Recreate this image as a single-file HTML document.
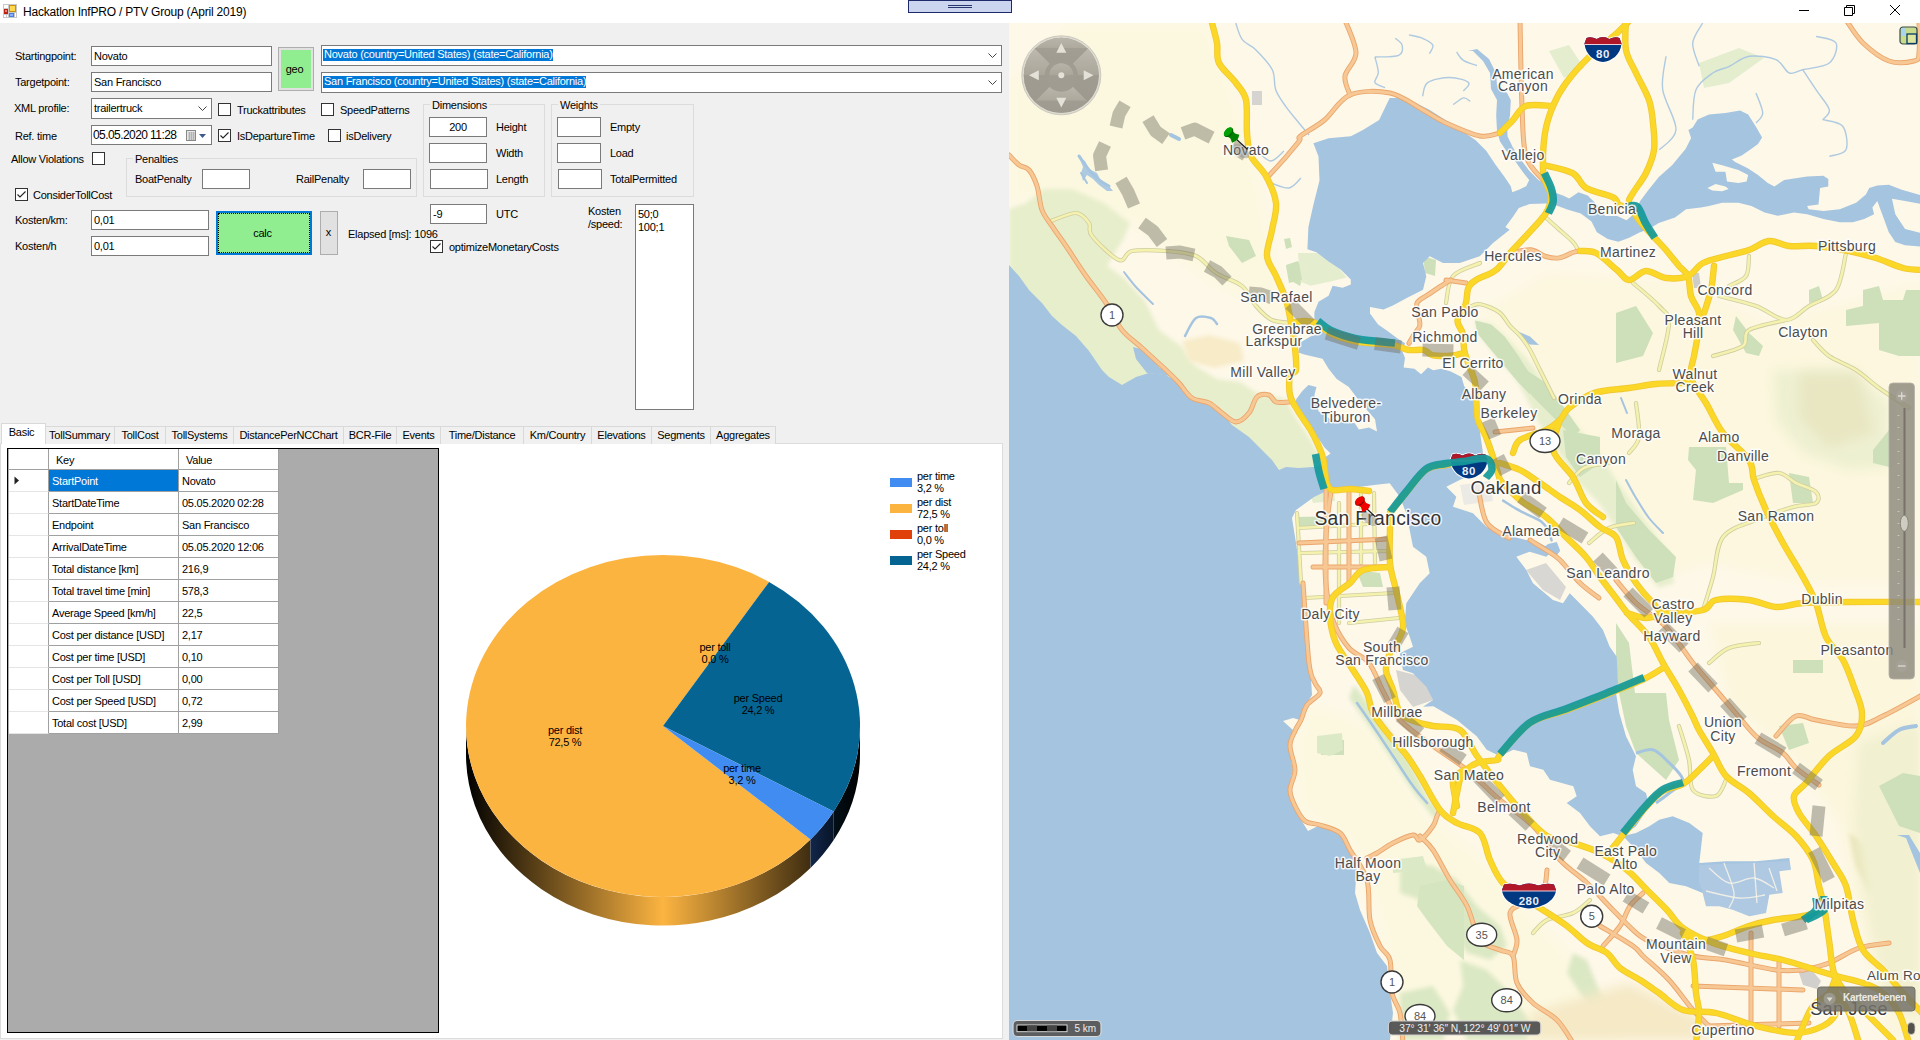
<!DOCTYPE html>
<html><head><meta charset="utf-8"><title>Hackatlon InfPRO / PTV Group (April 2019)</title>
<style>
html,body{margin:0;padding:0;}
body{width:1920px;height:1040px;overflow:hidden;position:relative;background:#fff;font-family:"Liberation Sans",sans-serif;font-size:11px;color:#000;}
.a{position:absolute;}
.l{position:absolute;margin-top:1px;line-height:13px;white-space:nowrap;font-size:11px;letter-spacing:-0.25px;}
.tb{position:absolute;box-sizing:border-box;background:#fff;border:1px solid #7a7a7a;height:20px;line-height:19px;padding-left:2px;white-space:nowrap;overflow:hidden;font-size:11px;letter-spacing:-0.25px;}
.cb{position:absolute;box-sizing:border-box;width:13px;height:13px;background:#fff;border:1px solid #333;}
.cb svg{position:absolute;left:0;top:0;}
.gb{position:absolute;box-sizing:border-box;border:1px solid #dcdcdc;}
.gb span{position:absolute;top:-6px;left:6px;background:#f0f0f0;padding:0 2px;line-height:13px;letter-spacing:-0.25px;}
.tab{position:absolute;box-sizing:border-box;top:426px;height:18px;border:1px solid #d9d9d9;border-bottom:none;border-left:none;background:#f0f0f0;line-height:17px;text-align:center;letter-spacing:-0.25px;white-space:nowrap;}
.gr{position:absolute;box-sizing:border-box;background:#fff;border-right:1px solid #a0a0a0;border-bottom:1px solid #a0a0a0;height:22px;line-height:23px;padding-left:3px;white-space:nowrap;letter-spacing:-0.25px;overflow:hidden;}
</style></head><body>
<!-- title bar -->
<div class="a" id="titlebar" style="left:0;top:0;width:1920px;height:23px;background:#fff;"></div>
<svg class="a" style="left:3px;top:4px" width="14" height="14" viewBox="0 0 14 14">
<rect x="0" y="0" width="14" height="14" fill="#c8c8c8"/><rect x="1" y="1" width="4" height="3" fill="#fff"/><rect x="1" y="5" width="4" height="5" fill="#c02010"/><rect x="2" y="6" width="2" height="2" fill="#f08070"/><rect x="6" y="1" width="7" height="7" fill="#c89010"/><rect x="7" y="2" width="5" height="5" fill="#ffd850"/><rect x="6" y="9" width="5" height="4" fill="#4a7fe0"/><rect x="7" y="10" width="3" height="2" fill="#8ab0ff"/><rect x="1" y="11" width="2" height="2" fill="#fff"/><rect x="4" y="11" width="1" height="2" fill="#fff"/><rect x="12" y="9" width="1" height="4" fill="#fff"/></svg>
<div class="a" style="left:23px;top:5px;font-size:12px;line-height:15px;white-space:nowrap;letter-spacing:-0.2px;" id="ttl">Hackatlon InfPRO / PTV Group (April 2019)</div>
<div class="a" style="left:908px;top:0;width:104px;height:13px;box-sizing:border-box;background:#ccd5f0;border:1px solid #1e2a6a;"><div class="a" style="left:39px;top:4px;width:24px;height:1px;background:#2a3570"></div><div class="a" style="left:39px;top:6px;width:24px;height:1px;background:#2a3570"></div></div>
<svg class="a" style="left:1790px;top:0" width="130" height="23" viewBox="0 0 130 23"><g stroke="#000" stroke-width="1" fill="none"><path d="M9 10.5h10"/><path d="M54.5 7.5h8v8h-8z" /><path d="M56.5 7.5v-2h8v8h-2"/><path d="M100 5l10 10M110 5l-10 10"/></g></svg>
<!-- form -->
<div class="a" id="form" style="left:0;top:23px;width:1009px;height:1017px;background:#f0f0f0;"></div>
<div class="l" style="left:15px;top:49px">Startingpoint:</div>
<div class="l" style="left:15px;top:75px">Targetpoint:</div>
<div class="l" style="left:14px;top:101px">XML profile:</div>
<div class="l" style="left:15px;top:129px">Ref. time</div>
<div class="l" style="left:11px;top:152px">Allow Violations</div>
<div class="tb" style="left:91px;top:46px;width:181px">Novato</div>
<div class="tb" style="left:91px;top:72px;width:181px">San Francisco</div>
<div class="tb" style="left:91px;top:98px;width:121px;height:21px;line-height:19px;padding-left:2px">trailertruck<svg class="a" style="right:4px;top:7px" width="9" height="6" viewBox="0 0 9 6"><path d="M0.5 0.5l4 4l4-4" stroke="#444" fill="none"/></svg></div>
<div class="tb" style="left:91px;top:125px;width:121px;padding-left:1px;font-size:12px;letter-spacing:-0.57px">05.05.2020 11:28<svg class="a" style="left:93px;top:2px" width="25" height="15" viewBox="0 0 25 15"><rect x="1.5" y="2.5" width="9" height="10" fill="#e8e8e8" stroke="#888"/><path d="M3 5h7M3 7h7M3 9h7M3 11h7M4.5 4v8M6.500 4v8M8.5 4v8" stroke="#aaa" stroke-width="0.8"/><path d="M14 6h7l-3.500 4z" fill="#3c5a8c"/></svg></div>
<div class="a" style="left:278px;top:47px;width:36px;height:44px;box-sizing:border-box;border:1px solid #adadad;background:#e1e1e1;"><div class="a" style="left:2px;top:2px;width:30px;height:38px;background:#90ee90;text-align:center;line-height:39px;letter-spacing:-0.25px;text-indent:-3px">geo</div></div>
<div class="tb" style="left:321px;top:45px;width:681px;height:21px;line-height:20px;padding-left:2px"><span style="position:absolute;left:1px;top:3px;background:#0078d7;color:#fff;height:12px;line-height:11px;padding-left:1px">Novato (country=United States) (state=California)</span><svg class="a" style="right:4px;top:7px" width="9" height="6" viewBox="0 0 9 6"><path d="M0.5 0.5l4 4l4-4" stroke="#444" fill="none"/></svg></div>
<div class="tb" style="left:321px;top:72px;width:681px;height:21px;line-height:20px;padding-left:2px"><span style="position:absolute;left:1px;top:3px;background:#0078d7;color:#fff;height:12px;line-height:11px;padding-left:1px">San Francisco (country=United States) (state=California)</span><svg class="a" style="right:4px;top:7px" width="9" height="6" viewBox="0 0 9 6"><path d="M0.5 0.5l4 4l4-4" stroke="#444" fill="none"/></svg></div>
<div class="cb" style="left:218px;top:103px"></div><div class="l" style="left:237px;top:103px">Truckattributes</div>
<div class="cb" style="left:321px;top:103px"></div><div class="l" style="left:340px;top:103px">SpeedPatterns</div>
<div class="cb" style="left:218px;top:129px"><svg width="11" height="11" viewBox="0 0 11 11"><path d="M1.500 5.500l2.500 2.500l5.500-5.500" stroke="#222" fill="none" stroke-width="1.1"/></svg></div><div class="l" style="left:237px;top:129px">IsDepartureTime</div>
<div class="cb" style="left:328px;top:129px"></div><div class="l" style="left:346px;top:129px">isDelivery</div>
<div class="cb" style="left:92px;top:152px"></div>
<div class="gb" style="left:126px;top:158px;width:291px;height:39px"><span>Penalties</span></div>
<div class="l" style="left:135px;top:172px">BoatPenalty</div><div class="tb" style="left:202px;top:169px;width:48px"></div>
<div class="l" style="left:296px;top:172px">RailPenalty</div><div class="tb" style="left:363px;top:169px;width:48px"></div>
<div class="gb" style="left:423px;top:104px;width:122px;height:93px"><span>Dimensions</span></div>
<div class="tb" style="left:429px;top:117px;width:58px;text-align:center;padding:0">200</div><div class="l" style="left:496px;top:120px">Height</div>
<div class="tb" style="left:429px;top:143px;width:58px"></div><div class="l" style="left:496px;top:146px">Width</div>
<div class="tb" style="left:430px;top:169px;width:58px"></div><div class="l" style="left:496px;top:172px">Length</div>
<div class="gb" style="left:551px;top:104px;width:143px;height:93px"><span>Weights</span></div>
<div class="tb" style="left:557px;top:117px;width:44px"></div><div class="l" style="left:610px;top:120px">Empty</div>
<div class="tb" style="left:557px;top:143px;width:44px"></div><div class="l" style="left:610px;top:146px">Load</div>
<div class="tb" style="left:558px;top:169px;width:44px"></div><div class="l" style="left:610px;top:172px">TotalPermitted</div>
<div class="tb" style="left:430px;top:204px;width:57px;padding-left:2px">-9</div><div class="l" style="left:496px;top:207px">UTC</div>
<div class="l" style="left:588px;top:204px">Kosten<br>/speed:</div>
<div class="tb" style="left:635px;top:204px;width:59px;height:206px;line-height:13px;padding:3px 0 0 2px">50;0<br>100;1</div>
<div class="cb" style="left:15px;top:188px"><svg width="11" height="11" viewBox="0 0 11 11"><path d="M1.500 5.500l2.500 2.500l5.500-5.500" stroke="#222" fill="none" stroke-width="1.1"/></svg></div><div class="l" style="left:33px;top:188px">ConsiderTollCost</div>
<div class="l" style="left:15px;top:213px">Kosten/km:</div><div class="tb" style="left:91px;top:210px;width:118px">0,01</div>
<div class="l" style="left:15px;top:239px">Kosten/h</div><div class="tb" style="left:91px;top:236px;width:118px">0,01</div>
<div class="a" style="left:216px;top:211px;width:96px;height:44px;box-sizing:border-box;border:2px solid #0078d7;background:#90ee90;"><div class="a" style="left:0;top:0;right:0;bottom:0;border:1px dotted #000;text-align:center;line-height:38px;letter-spacing:-0.25px;text-indent:-3px">calc</div></div>
<div class="a" style="left:320px;top:211px;width:18px;height:44px;box-sizing:border-box;border:1px solid #adadad;background:#e1e1e1;text-align:center;line-height:40px;text-indent:-1px">x</div>
<div class="l" style="left:348px;top:227px">Elapsed [ms]: 1096</div>
<div class="cb" style="left:430px;top:240px"><svg width="11" height="11" viewBox="0 0 11 11"><path d="M1.500 5.500l2.500 2.500l5.500-5.500" stroke="#222" fill="none" stroke-width="1.1"/></svg></div><div class="l" style="left:449px;top:240px">optimizeMonetaryCosts</div>
<!-- tabs -->
<div class="a" style="left:0px;top:443px;width:1003px;height:596px;box-sizing:border-box;background:#fff;border:1px solid #dcdcdc;"></div>
<div class="tab" style="left:45px;width:70px">TollSummary</div>
<div class="tab" style="left:115px;width:51px">TollCost</div>
<div class="tab" style="left:166px;width:68px">TollSystems</div>
<div class="tab" style="left:234px;width:110px">DistancePerNCChart</div>
<div class="tab" style="left:344px;width:53px">BCR-File</div>
<div class="tab" style="left:397px;width:44px">Events</div>
<div class="tab" style="left:441px;width:83px">Time/Distance</div>
<div class="tab" style="left:524px;width:68px">Km/Country</div>
<div class="tab" style="left:592px;width:60px">Elevations</div>
<div class="tab" style="left:652px;width:59px">Segments</div>
<div class="tab" style="left:711px;width:65px">Aggregates</div>
<div class="tab" style="left:1px;top:423px;width:45px;height:21px;background:#fff;border-left:1px solid #d9d9d9;line-height:17px;text-indent:-4px;">Basic</div>
<!-- grid -->
<div class="a" style="left:7px;top:448px;width:432px;height:585px;box-sizing:border-box;background:#ababab;border:1px solid #000;"></div>
<div class="gr" style="left:9px;top:449px;width:40px;height:21px;"></div>
<div class="gr" style="left:49px;top:449px;width:130px;height:21px;padding-left:7px">Key</div>
<div class="gr" style="left:179px;top:449px;width:100px;height:21px;padding-left:7px">Value</div>
<div class="gr" style="left:9px;top:470px;width:40px;border-right-color:#a0a0a0;border-bottom-color:#e5e5e5"></div>
<div class="gr" style="left:49px;top:470px;width:130px;background:#0078d7;color:#fff;">StartPoint</div>
<div class="gr" style="left:179px;top:470px;width:100px;">Novato</div>
<div class="gr" style="left:9px;top:492px;width:40px;border-right-color:#a0a0a0;border-bottom-color:#e5e5e5"></div>
<div class="gr" style="left:49px;top:492px;width:130px;">StartDateTime</div>
<div class="gr" style="left:179px;top:492px;width:100px;">05.05.2020 02:28</div>
<div class="gr" style="left:9px;top:514px;width:40px;border-right-color:#a0a0a0;border-bottom-color:#e5e5e5"></div>
<div class="gr" style="left:49px;top:514px;width:130px;">Endpoint</div>
<div class="gr" style="left:179px;top:514px;width:100px;">San Francisco</div>
<div class="gr" style="left:9px;top:536px;width:40px;border-right-color:#a0a0a0;border-bottom-color:#e5e5e5"></div>
<div class="gr" style="left:49px;top:536px;width:130px;">ArrivalDateTime</div>
<div class="gr" style="left:179px;top:536px;width:100px;">05.05.2020 12:06</div>
<div class="gr" style="left:9px;top:558px;width:40px;border-right-color:#a0a0a0;border-bottom-color:#e5e5e5"></div>
<div class="gr" style="left:49px;top:558px;width:130px;">Total distance [km]</div>
<div class="gr" style="left:179px;top:558px;width:100px;">216,9</div>
<div class="gr" style="left:9px;top:580px;width:40px;border-right-color:#a0a0a0;border-bottom-color:#e5e5e5"></div>
<div class="gr" style="left:49px;top:580px;width:130px;">Total travel time [min]</div>
<div class="gr" style="left:179px;top:580px;width:100px;">578,3</div>
<div class="gr" style="left:9px;top:602px;width:40px;border-right-color:#a0a0a0;border-bottom-color:#e5e5e5"></div>
<div class="gr" style="left:49px;top:602px;width:130px;">Average Speed [km/h]</div>
<div class="gr" style="left:179px;top:602px;width:100px;">22,5</div>
<div class="gr" style="left:9px;top:624px;width:40px;border-right-color:#a0a0a0;border-bottom-color:#e5e5e5"></div>
<div class="gr" style="left:49px;top:624px;width:130px;">Cost per distance [USD]</div>
<div class="gr" style="left:179px;top:624px;width:100px;">2,17</div>
<div class="gr" style="left:9px;top:646px;width:40px;border-right-color:#a0a0a0;border-bottom-color:#e5e5e5"></div>
<div class="gr" style="left:49px;top:646px;width:130px;">Cost per time [USD]</div>
<div class="gr" style="left:179px;top:646px;width:100px;">0,10</div>
<div class="gr" style="left:9px;top:668px;width:40px;border-right-color:#a0a0a0;border-bottom-color:#e5e5e5"></div>
<div class="gr" style="left:49px;top:668px;width:130px;">Cost per Toll [USD]</div>
<div class="gr" style="left:179px;top:668px;width:100px;">0,00</div>
<div class="gr" style="left:9px;top:690px;width:40px;border-right-color:#a0a0a0;border-bottom-color:#e5e5e5"></div>
<div class="gr" style="left:49px;top:690px;width:130px;">Cost per Speed [USD]</div>
<div class="gr" style="left:179px;top:690px;width:100px;">0,72</div>
<div class="gr" style="left:9px;top:712px;width:40px;border-right-color:#a0a0a0;border-bottom-color:#e5e5e5"></div>
<div class="gr" style="left:49px;top:712px;width:130px;">Total cost [USD]</div>
<div class="gr" style="left:179px;top:712px;width:100px;">2,99</div>
<svg class="a" style="left:14px;top:476px" width="6" height="9" viewBox="0 0 6 9"><path d="M0.5 0.5v8l4.500-4z" fill="#222"/></svg>
<!-- pie -->
<svg class="a" style="left:440px;top:445px" width="560" height="590" viewBox="440 445 560 590">
<defs><linearGradient id="og" gradientUnits="userSpaceOnUse" x1="466" y1="0" x2="860" y2="0"><stop offset="0" stop-color="#000"/><stop offset="0.5" stop-color="#fcb441"/><stop offset="1" stop-color="#000"/></linearGradient><linearGradient id="bg1" gradientUnits="userSpaceOnUse" x1="810" y1="0" x2="833" y2="0"><stop offset="0" stop-color="#13274a"/><stop offset="1" stop-color="#08152a"/></linearGradient><linearGradient id="bg2" gradientUnits="userSpaceOnUse" x1="833" y1="0" x2="860" y2="0"><stop offset="0" stop-color="#021018"/><stop offset="1" stop-color="#000"/></linearGradient></defs>
<path d="M466.0 726.0 A197 171 0 0 0 810.5 839.4 L810.5 867.9 A197 171 0 0 1 466.0 754.5 Z" fill="url(#og)"/>
<path d="M810.5 839.4 A197 171 0 0 0 833.7 811.4 L833.7 839.9 A197 171 0 0 1 810.5 867.9 Z" fill="url(#bg1)"/>
<path d="M833.7 811.4 A197 171 0 0 0 860.0 726.0 L860.0 754.5 A197 171 0 0 1 833.7 839.9 Z" fill="url(#bg2)"/>
<path d="M663 726 L810.5 839.4 A197 171 0 1 1 769.1 581.9 Z" fill="#fcb441"/>
<path d="M663 726 L769.1 581.9 A197 171 0 0 1 833.7 811.4 Z" fill="#056492"/>
<path d="M663 726 L833.7 811.4 A197 171 0 0 1 810.5 839.4 Z" fill="#418cf0"/>
<g font-family="Liberation Sans, sans-serif" fill="#000">
<text x="715" y="651" text-anchor="middle" font-size="11" letter-spacing="-0.25">per toll</text><text x="715" y="663" text-anchor="middle" font-size="11" letter-spacing="-0.25">0,0 %</text>
<text x="758" y="702" text-anchor="middle" font-size="11" letter-spacing="-0.25">per Speed</text><text x="758" y="714" text-anchor="middle" font-size="11" letter-spacing="-0.25">24,2 %</text>
<text x="565" y="734" text-anchor="middle" font-size="11" letter-spacing="-0.25">per dist</text><text x="565" y="746" text-anchor="middle" font-size="11" letter-spacing="-0.25">72,5 %</text>
<text x="742" y="772" text-anchor="middle" font-size="11" letter-spacing="-0.25">per time</text><text x="742" y="784" text-anchor="middle" font-size="11" letter-spacing="-0.25">3,2 %</text>
<rect x="890" y="478" width="22" height="9" fill="#418cf0"/>
<text x="917" y="480" font-size="11" letter-spacing="-0.25">per time</text><text x="917" y="492" font-size="11" letter-spacing="-0.25">3,2 %</text>
<rect x="890" y="504" width="22" height="9" fill="#fcb441"/>
<text x="917" y="506" font-size="11" letter-spacing="-0.25">per dist</text><text x="917" y="518" font-size="11" letter-spacing="-0.25">72,5 %</text>
<rect x="890" y="530" width="22" height="9" fill="#e0400a"/>
<text x="917" y="532" font-size="11" letter-spacing="-0.25">per toll</text><text x="917" y="544" font-size="11" letter-spacing="-0.25">0,0 %</text>
<rect x="890" y="556" width="22" height="9" fill="#056492"/>
<text x="917" y="558" font-size="11" letter-spacing="-0.25">per Speed</text><text x="917" y="570" font-size="11" letter-spacing="-0.25">24,2 %</text>
</g></svg>

<svg class="a" style="left:1009px;top:23px" width="911" height="1017" viewBox="0 0 911 1017" font-family="Liberation Sans, sans-serif">
<defs><filter id="bl" x="-20%" y="-20%" width="140%" height="140%"><feGaussianBlur stdDeviation="6"/></filter><filter id="bl2" x="-20%" y="-20%" width="140%" height="140%"><feGaussianBlur stdDeviation="2"/></filter><clipPath id="mc"><rect x="0" y="0" width="911" height="1017"/></clipPath></defs>
<g clip-path="url(#mc)">
<rect x="0" y="0" width="911" height="1017" fill="#fef8e9"/>
<path d="M60.0 0.0 L200.0 0.0 L230.0 80.0 L250.0 150.0 L270.0 250.0 L280.0 300.0 L200.0 260.0 L120.0 200.0 L60.0 170.0 L0.0 180.0 L0.0 60.0 Z" fill="#fcf8e0" opacity="1" filter="url(#bl)"/>
<path d="M540.0 250.0 L680.0 260.0 L760.0 300.0 L911.0 260.0 L911.0 560.0 L800.0 560.0 L700.0 540.0 L640.0 560.0 L560.0 420.0 L500.0 330.0 L470.0 290.0 Z" fill="#fcf7de" opacity="1" filter="url(#bl)"/>
<path d="M700.0 600.0 L911.0 600.0 L911.0 1017.0 L880.0 1017.0 L850.0 900.0 L830.0 800.0 L790.0 740.0 L720.0 680.0 Z" fill="#fbf6dc" opacity="1" filter="url(#bl)"/>
<path d="M300.0 680.0 L360.0 700.0 L420.0 790.0 L470.0 830.0 L560.0 930.0 L620.0 1017.0 L390.0 1017.0 L370.0 900.0 L340.0 820.0 L290.0 790.0 L285.0 720.0 Z" fill="#fcf8e0" opacity="1" filter="url(#bl)"/>
<path d="M0.0 186.0 L17.0 180.0 L35.0 166.0 L63.0 166.0 L95.0 180.0 L121.0 200.0 L115.0 215.0 L98.0 243.0 L115.0 255.0 L136.0 278.0 L150.0 307.0 L173.0 324.0 L185.0 342.0 L208.0 356.0 L231.0 359.0 L248.0 370.0 L277.0 376.0 L285.0 392.0 L298.0 411.0 L308.0 428.0 L312.0 445.0 L270.0 470.0 L90.0 360.0 L0.0 260.0 Z" fill="#e7eecb" opacity="1" filter="url(#bl2)"/>
<path d="M173.0 318.0 L200.0 312.0 L231.0 320.0 L235.0 338.0 L205.0 345.0 L180.0 338.0 Z" fill="#f7ebc8" opacity="1" filter="url(#bl2)"/>
<path d="M466.0 297.0 L482.0 301.0 L496.0 313.0 L521.0 340.0 L545.0 375.0 L565.0 400.0 L590.0 430.0 L607.0 457.0 L630.0 490.0 L660.0 530.0 L665.0 560.0 L650.0 565.0 L625.0 535.0 L607.0 505.0 L590.0 480.0 L570.0 460.0 L550.0 430.0 L530.0 400.0 L509.0 359.0 L482.0 327.0 L469.0 311.0 Z" fill="#e6eecd" opacity="1" filter="url(#bl2)"/>
<path d="M764.0 347.0 L840.0 347.0 L880.0 380.0 L880.0 444.0 L840.0 447.0 L794.0 430.0 L767.0 397.0 Z" fill="#eef0d2" opacity="1" filter="url(#bl)"/>
<path d="M790.0 350.0 L850.0 350.0 L865.0 410.0 L820.0 425.0 L790.0 395.0 Z" fill="#e9e7c2" opacity="1" filter="url(#bl)"/>
<path d="M840.0 810.0 L867.0 827.0 L874.0 857.0 L860.0 870.0 L847.0 843.0 Z" fill="#e6e3b6" opacity="1" filter="url(#bl2)"/>
<path d="M850.0 720.0 L911.0 700.0 L911.0 1000.0 L880.0 980.0 L860.0 900.0 L845.0 800.0 Z" fill="#f1f0d0" opacity="1" filter="url(#bl)"/>
<path d="M391.0 837.0 L424.0 843.0 L448.0 857.0 L468.0 883.0 L491.0 903.0 L498.0 923.0 L481.0 937.0 L458.0 930.0 L441.0 903.0 L411.0 877.0 L391.0 870.0 Z" fill="#dbe8c4" opacity="1" filter="url(#bl2)"/>
<path d="M451.0 937.0 L478.0 947.0 L501.0 970.0 L524.0 1003.0 L518.0 1017.0 L458.0 1017.0 L444.0 987.0 L454.0 963.0 Z" fill="#dbe8c4" opacity="1" filter="url(#bl2)"/>
<path d="M564.0 930.0 L578.0 937.0 L591.0 970.0 L604.0 990.0 L591.0 997.0 L571.0 970.0 L558.0 950.0 Z" fill="#dbe8c4" opacity="1" filter="url(#bl2)"/>
<path d="M391.0 970.0 L424.0 963.0 L441.0 990.0 L434.0 1017.0 L391.0 1017.0 Z" fill="#dbe8c4" opacity="1" filter="url(#bl2)"/>
<path d="M345.0 662.0 L380.0 707.0 L400.0 737.0 L420.0 777.0 L432.0 790.0 L425.0 795.0 L405.0 770.0 L385.0 740.0 L365.0 710.0 L340.0 675.0 Z" fill="#dce9c6" opacity="1" filter="url(#bl2)"/>
<path d="M520.0 990.0 L620.0 960.0 L700.0 1000.0 L700.0 1017.0 L520.0 1017.0 Z" fill="#f5e9c6" opacity="1" filter="url(#bl)"/>
<path d="M607.0 290.0 L627.0 283.0 L644.0 310.0 L634.0 333.0 L607.0 340.0 Z" fill="#cde0ba" opacity="1"/>
<path d="M800.0 267.0 L810.0 263.0 L814.0 277.0 L800.0 280.0 Z" fill="#cde0ba" opacity="1"/>
<path d="M837.0 287.0 L854.0 283.0 L854.0 267.0 L870.0 263.0 L874.0 277.0 L894.0 277.0 L897.0 267.0 L911.0 267.0 L911.0 333.0 L890.0 333.0 L870.0 327.0 L870.0 300.0 L837.0 303.0 Z" fill="#cde0ba" opacity="1"/>
<path d="M727.0 293.0 L740.0 310.0 L754.0 323.0 L750.0 333.0 L737.0 330.0 L724.0 307.0 Z" fill="#cde0ba" opacity="1"/>
<path d="M680.0 424.0 L717.0 424.0 L720.0 460.0 L734.0 460.0 L734.0 467.0 L704.0 480.0 L684.0 477.0 L687.0 447.0 L679.0 437.0 Z" fill="#cde0ba" opacity="1"/>
<path d="M607.0 457.0 L617.0 480.0 L640.0 507.0 L667.0 534.0 L664.0 554.0 L647.0 560.0 L627.0 534.0 L607.0 504.0 Z" fill="#cde0ba" opacity="1"/>
<path d="M780.0 450.0 L800.0 454.0 L804.0 480.0 L784.0 480.0 Z" fill="#cde0ba" opacity="1"/>
<path d="M784.0 637.0 L814.0 637.0 L814.0 650.0 L784.0 650.0 Z" fill="#cde0ba" opacity="1"/>
<path d="M864.0 427.0 L880.0 407.0 L880.0 444.0 L864.0 440.0 Z" fill="#cde0ba" opacity="1"/>
<path d="M466.0 297.4 L482.1 301.4 L495.6 313.5 L509.1 332.4 L521.0 351.2 L521.0 371.4 L509.1 359.3 L495.6 343.1 L482.1 327.0 L468.7 310.8 Z" fill="#cde0ba" opacity="1"/>
<path d="M517.0 347.0 L537.0 360.0 L557.0 387.0 L571.0 407.0 L564.0 414.0 L544.0 394.0 L524.0 374.0 L511.0 357.0 Z" fill="#cde0ba" opacity="1"/>
<path d="M554.0 407.0 L591.0 414.0 L591.0 440.0 L571.0 454.0 L557.0 434.0 Z" fill="#cde0ba" opacity="1"/>
<path d="M610.0 670.0 L657.0 670.0 L660.0 697.0 L670.0 737.0 L657.0 757.0 L627.0 730.0 L617.0 703.0 Z" fill="#cde0ba" opacity="1"/>
<path d="M607.0 600.0 L620.0 620.0 L626.0 670.0 L610.0 670.0 L607.0 640.0 Z" fill="#cde0ba" opacity="1"/>
<path d="M770.0 703.0 L794.0 700.0 L800.0 720.0 L780.0 727.0 Z" fill="#cde0ba" opacity="1"/>
<path d="M870.0 763.0 L894.0 750.0 L911.0 753.0 L911.0 810.0 L890.0 803.0 L880.0 783.0 Z" fill="#cde0ba" opacity="1"/>
<path d="M277.0 242.0 L289.0 238.0 L295.0 250.0 L291.0 263.0 L281.0 257.0 Z" fill="#cde0ba" opacity="1"/>
<path d="M275.0 216.0 L281.0 215.0 L283.0 224.0 L277.0 226.0 Z" fill="#cde0ba" opacity="1"/>
<path d="M289.0 230.0 L309.5 230.0 L327.7 242.5 L337.8 254.6 L321.6 258.6 L301.4 262.7 L291.0 258.6 Z" fill="#e4eecf" opacity="1"/>
<path d="M217.0 213.0 L240.0 217.0 L247.0 233.0 L233.0 240.0 L220.0 223.0 Z" fill="#cde0ba" opacity="1"/>
<path d="M277.0 243.0 L290.0 240.0 L293.0 257.0 L280.0 260.0 Z" fill="#cde0ba" opacity="1"/>
<path d="M414.0 233.0 L427.0 237.0 L426.0 253.0 L416.0 250.0 Z" fill="#cde0ba" opacity="1"/>
<path d="M347.0 547.0 L371.0 550.0 L374.0 564.0 L354.0 564.0 Z" fill="#cde0ba" opacity="1"/>
<path d="M288.0 494.0 L330.0 493.0 L330.0 502.0 L288.0 504.0 Z" fill="#cde0ba" opacity="1"/>
<path d="M300.0 468.0 L325.0 466.0 L326.0 478.0 L304.0 480.0 Z" fill="#e4eecf" opacity="1"/>
<path d="M312.0 717.0 L335.0 717.0 L335.0 732.0 L312.0 732.0 Z" fill="#cde0ba" opacity="1"/>
<path d="M308.0 713.0 L333.0 710.0 L334.0 727.0 L321.0 733.0 L308.0 730.0 Z" fill="#dce9c6" opacity="1"/>
<path d="M384.0 837.0 L414.0 833.0 L418.0 847.0 L384.0 850.0 Z" fill="#dce9c6" opacity="1"/>
<path d="M411.0 863.0 L438.0 857.0 L455.0 863.0 L455.0 937.0 L438.0 923.0 L418.0 897.0 L408.0 883.0 Z" fill="#d5e5bf" opacity="1"/>
<path d="M540.0 28.0 L560.0 22.0 L575.0 45.0 L555.0 55.0 Z" fill="#e4eecf" opacity="1"/>
<path d="M690.0 40.0 L730.0 25.0 L755.0 35.0 L720.0 60.0 L695.0 65.0 Z" fill="#e4eecf" opacity="1"/>
<path d="M387.0 647.0 L414.0 654.0 L424.0 677.0 L404.0 684.0 L391.0 667.0 Z" fill="#d6d4d0" opacity="1"/>
<path d="M517.0 547.0 L537.0 540.0 L557.0 564.0 L551.0 577.0 L534.0 567.0 Z" fill="#d9d7d3" opacity="1"/>
<path d="M451.0 462.0 L481.0 458.0 L484.0 478.0 L455.0 482.0 Z" fill="#eceae4" opacity="1"/>
<path d="M243.0 68.0 L253.0 68.0 L253.0 82.0 L243.0 82.0 Z" fill="#d6d4d0" opacity="1"/>
<path d="M683.0 250.0 L690.0 250.0 L692.0 265.0 L685.0 265.0 Z" fill="#cfcdc8" opacity="1"/>
<path d="M789.0 947.0 L800.0 944.0 L812.0 958.0 L808.0 966.0 L794.0 962.0 Z" fill="#d2d0cc" opacity="1"/>
<path d="M0.0 242.0 L10.0 253.0 L20.0 267.0 L33.0 280.0 L43.0 293.0 L53.0 302.0 L67.0 313.0 L80.0 328.0 L93.0 347.0 L100.0 354.0 L113.0 362.0 L127.0 354.0 L140.0 350.0 L157.0 352.0 L170.0 360.0 L183.0 375.0 L200.0 380.0 L213.0 390.0 L223.0 402.0 L240.0 414.0 L253.0 427.0 L263.0 437.0 L270.0 447.0 L277.0 444.0 L290.0 445.0 L304.0 444.0 L312.5 442.8 L330.0 445.0 L330.0 462.0 L319.6 467.0 L305.0 474.0 L287.0 487.0 L283.0 495.0 L287.0 520.0 L292.0 554.0 L297.0 587.0 L300.0 630.0 L302.0 655.0 L303.0 672.0 L298.0 680.0 L291.0 697.0 L284.0 695.0 L274.0 698.0 L284.0 707.0 L279.0 723.0 L284.0 747.0 L279.0 767.0 L284.0 783.0 L294.0 800.0 L299.0 808.0 L311.0 802.0 L331.0 810.0 L341.0 827.0 L348.0 843.0 L346.0 870.0 L351.0 887.0 L361.0 910.0 L368.0 930.0 L378.0 943.0 L381.0 970.0 L384.0 990.0 L381.0 1017.0 L0.0 1017.0 Z" fill="#a5c4e0"/>
<path d="M312.5 442.8 L315.5 434.7 L321.6 430.6 L315.5 424.6 L307.5 412.5 L295.3 398.3 L285.2 384.2 L287.3 376.1 L293.3 368.0 L299.4 362.0 L307.5 364.0 L305.4 372.0 L309.5 388.2 L321.6 396.3 L345.8 400.3 L349.9 406.4 L360.0 404.4 L368.0 408.4 L366.0 396.3 L351.9 380.1 L345.8 372.0 L339.8 364.0 L327.7 355.9 L319.6 345.8 L313.5 335.7 L295.3 331.6 L289.3 329.6 L291.3 319.5 L301.4 313.5 L311.5 310.4 L308.5 307.1 L305.4 299.0 L305.4 288.9 L309.5 278.8 L319.6 272.8 L323.6 262.7 L333.7 264.7 L341.8 261.6 L341.8 256.6 L331.7 246.5 L319.6 238.4 L307.5 229.3 L298.4 226.3 L299.4 204.1 L304.4 181.8 L310.5 157.6 L309.5 133.4 L304.4 120.2 L319.6 115.2 L341.8 113.2 L353.9 107.1 L370.1 97.0 L380.7 75.0 L396.5 74.9 L420.4 86.8 L444.2 102.1 L466.4 117.0 L477.2 127.8 L486.4 141.6 L495.6 153.9 L501.8 163.2 L503.3 169.3 L511.0 166.2 L517.2 163.2 L520.2 157.0 L529.5 157.0 L534.1 160.1 L544.8 169.3 L554.0 172.4 L560.2 175.5 L569.5 169.3 L578.7 172.4 L591.0 184.7 L596.0 193.1 L608.1 193.1 L617.5 197.2 L625.6 190.4 L631.0 178.3 L639.0 167.6 L649.8 154.1 L663.3 142.0 L676.7 125.8 L682.1 115.1 L679.4 107.0 L683.7 104.6 L688.6 96.4 L700.0 91.5 L716.4 89.9 L731.1 87.4 L739.2 91.5 L747.4 104.6 L753.1 114.4 L749.0 120.9 L742.5 125.8 L732.7 132.4 L722.9 136.4 L726.2 138.9 L739.2 145.4 L749.0 152.0 L758.8 160.1 L765.4 163.4 L775.2 156.9 L786.6 155.2 L798.1 153.6 L814.4 152.8 L819.3 156.1 L819.3 163.4 L811.1 165.0 L809.5 181.4 L798.1 183.0 L799.7 186.3 L814.4 187.9 L830.7 186.3 L847.1 179.7 L856.9 171.6 L860.2 165.0 L868.3 162.6 L879.8 161.8 L892.8 166.7 L915.0 173.2 L915.0 181.4 L896.1 178.1 L883.0 175.7 L886.3 191.2 L896.1 205.9 L915.0 210.8 L915.0 223.9 L896.1 222.2 L886.3 219.0 L879.8 209.2 L873.2 191.2 L868.3 178.1 L863.4 184.6 L865.1 191.2 L855.2 196.1 L843.8 199.3 L830.7 199.3 L814.4 196.1 L798.1 191.2 L785.0 189.5 L768.6 192.8 L755.6 189.5 L742.5 183.0 L729.4 179.7 L713.1 179.7 L700.0 183.0 L691.8 184.6 L677.1 186.3 L666.0 194.5 L649.8 199.9 L639.0 206.6 L631.0 209.3 L620.2 214.7 L609.4 218.7 L598.7 216.0 L587.9 209.3 L582.5 198.5 L571.8 190.4 L558.3 186.4 L547.5 182.4 L536.8 180.4 L520.6 181.0 L509.8 185.1 L504.5 193.1 L496.4 203.9 L500.7 206.7 L484.0 220.0 L470.7 233.3 L450.7 240.0 L434.0 240.0 L420.7 233.3 L414.0 240.0 L417.3 253.3 L414.0 266.7 L412.1 267.8 L398.7 274.5 L383.9 282.6 L374.5 286.6 L361.0 283.9 L361.0 290.6 L369.1 301.4 L378.5 308.1 L387.9 314.9 L396.0 320.3 L393.3 328.3 L396.0 335.1 L394.6 344.5 L405.4 345.8 L412.1 351.2 L418.9 344.5 L424.3 347.2 L432.3 345.8 L441.8 348.5 L452.5 353.9 L455.2 363.3 L460.6 368.7 L464.6 378.1 L466.0 397.0 L470.7 407.0 L474.0 430.3 L474.0 447.0 L450.7 457.0 L437.3 463.7 L447.3 473.7 L444.0 483.7 L464.0 490.3 L477.3 503.7 L490.7 510.3 L504.0 513.7 L517.3 517.0 L530.7 520.3 L544.0 527.0 L537.3 533.7 L520.7 528.7 L507.3 533.7 L517.3 547.0 L524.0 560.3 L544.0 577.0 L554.0 580.3 L560.7 570.3 L570.7 580.3 L584.0 593.7 L594.0 607.0 L600.7 623.7 L607.7 633.7 L609.0 660.0 L607.0 670.0 L610.3 690.0 L617.0 713.3 L627.0 733.3 L623.7 746.7 L627.0 763.3 L637.0 770.0 L640.3 783.3 L627.0 803.3 L613.7 813.3 L604.3 810.0 L591.0 813.3 L581.0 803.3 L571.0 790.0 L557.7 780.0 L567.7 773.3 L564.3 763.3 L541.0 756.7 L534.3 746.7 L521.0 743.3 L517.7 730.0 L504.3 726.7 L491.0 733.3 L477.7 726.7 L467.7 713.3 L447.7 696.7 L424.3 683.3 L414.0 683.7 L424.0 677.0 L417.3 663.7 L404.0 650.3 L394.0 647.0 L390.7 630.3 L404.0 623.7 L400.7 613.7 L395.7 600.3 L397.3 580.3 L404.0 570.3 L410.7 560.3 L420.7 550.3 L417.3 533.7 L404.0 523.7 L400.7 507.0 L397.3 490.3 L390.7 473.7 L380.7 460.3 L365.0 462.0 L350.0 464.0 L335.0 466.0 L319.6 467.0 L330.0 455.0 Z" fill="#a5c4e0"/>
<path d="M703.3 139.7 L713.1 142.2 L729.4 147.1 L739.2 152.0 L737.6 158.5 L729.4 160.1 L718.0 158.5 L716.4 148.7 L706.6 148.7 Z" fill="#fef8e9"/>
<path d="M698.4 165.0 L706.6 161.0 L716.4 163.4 L719.6 165.9 L713.1 168.3 L703.3 167.5 Z" fill="#fef8e9"/>
<path d="M614.0 813.0 L627.0 810.0 L640.3 803.3 L650.3 796.7 L663.7 793.3 L680.3 800.0 L693.7 810.0 L690.3 840.0 L717.0 838.3 L747.0 838.3 L780.3 835.0 L782.0 846.7 L770.3 848.3 L773.7 870.0 L760.3 871.7 L757.0 890.0 L740.3 893.3 L723.7 886.7 L710.3 883.3 L697.0 883.3 L693.7 870.0 L677.0 863.3 L660.3 860.0 L650.3 850.0 L637.0 840.0 L627.0 826.7 Z" fill="#a5c4e0"/>
<path d="M690.0 842.0 L782.0 838.0 L782.0 847.0 L771.0 849.0 L774.0 870.0 L760.0 872.0 L757.0 890.0 L740.0 893.0 L724.0 887.0 L697.0 883.0 L694.0 870.0 L690.0 860.0 Z" fill="#fef8e9" opacity="0.1"/>
<path d="M627.0 730.0 C629.8 729.5 638.7 725.6 643.7 726.7 C648.7 727.8 652.0 731.7 657.0 736.7 C662.0 741.7 673.2 751.2 673.7 756.7 C674.2 762.2 664.8 766.1 660.3 770.0 C655.8 773.9 649.2 778.3 647.0 780.0" fill="none" stroke="#a5c4e0" stroke-width="3"/>
<path d="M70.0 133.0 C71.7 135.3 76.7 143.0 80.0 147.0 C83.3 151.0 86.7 154.3 90.0 157.0 C93.3 159.7 98.3 162.0 100.0 163.0" fill="none" stroke="#a5c4e0" stroke-width="3" stroke-linecap="round"/>
<path d="M72.0 150.0 L78.0 160.0" fill="none" stroke="#a5c4e0" stroke-width="2" stroke-linecap="round"/>
<path d="M115.0 249.0 C117.0 251.5 122.2 258.7 127.0 264.0 C131.8 269.3 141.2 278.2 144.0 281.0" fill="none" stroke="#a5c4e0" stroke-width="2" stroke-linecap="round"/>
<path d="M176.0 313.0 C177.8 310.0 182.7 298.0 187.0 295.0 C191.3 292.0 198.5 294.0 202.0 295.0 C205.5 296.0 207.0 300.0 208.0 301.0" fill="none" stroke="#a5c4e0" stroke-width="2.5" stroke-linecap="round"/>
<path d="M348.0 680.0 C350.7 683.8 358.0 694.2 364.0 703.0 C370.0 711.8 377.3 723.0 384.0 733.0 C390.7 743.0 398.3 755.2 404.0 763.0 C409.7 770.8 415.7 777.2 418.0 780.0" fill="none" stroke="#a5c4e0" stroke-width="2.5" stroke-linecap="round"/>
<path d="M874.0 720.0 C876.7 717.8 884.5 709.8 890.0 707.0 C895.5 704.2 904.2 703.7 907.0 703.0" fill="none" stroke="#a5c4e0" stroke-width="4" stroke-linecap="round"/>
<path d="M888.0 812.0 L897.0 815.0 L905.0 835.0 L911.0 850.0 L911.0 830.0 L900.0 812.0 Z" fill="#a5c4e0"/>
<path d="M507.7 308.0 L521.0 313.5 L530.0 322.0 L521.0 321.6 L511.7 316.0 Z" fill="#a5c4e0"/>
<path d="M124.0 324.0 L136.0 327.0 L150.0 344.0 L162.0 353.0 L138.0 350.0 L127.0 336.0 Z" fill="#a5c4e0"/>
<path d="M617.0 457.0 C618.7 460.0 623.2 468.7 627.0 475.0 C630.8 481.3 635.5 489.2 640.0 495.0 C644.5 500.8 651.7 507.5 654.0 510.0" fill="none" stroke="#a5c4e0" stroke-width="2" stroke-linecap="round"/>
<path d="M612.0 375.0 L618.0 390.0" fill="none" stroke="#a5c4e0" stroke-width="2" stroke-linecap="round"/>
<path d="M162.0 112.0 L170.0 116.0" fill="none" stroke="#a5c4e0" stroke-width="4" stroke-linecap="round"/>
<path d="M488.0 77.0 L487.2 92.4 L488.0 107.8 L491.0 118.5 L497.2 127.8 L506.4 138.5 L514.0 149.3 L520.2 157.0 L529.5 157.0 L520.2 147.8 L511.0 135.5 L503.8 124.2 L498.6 113.4 L498.2 104.7 L501.0 92.4 L501.8 77.0 Z" fill="#a5c4e0"/>
<path d="M459.0 28.0 L464.0 28.0 L474.0 38.0 L481.0 50.0 L482.0 66.0 L488.0 77.0 L501.8 77.0 L498.0 70.0 L488.0 62.0 L487.0 50.0 L480.0 36.0 L468.0 26.0 Z" fill="#a5c4e0"/>
<path d="M365.9 34.0 C366.5 36.6 369.3 45.1 369.3 49.4 C369.3 53.7 364.8 57.0 365.9 59.6 C367.0 62.2 374.4 63.9 376.1 64.7" fill="none" stroke="#a5c4e0" stroke-width="1.4" opacity="0.9"/>
<path d="M365.9 34.0 C369.9 33.7 385.2 34.3 389.7 32.3 C394.2 30.3 393.7 24.9 393.1 22.1 C392.5 19.3 387.4 16.4 386.3 15.3" fill="none" stroke="#a5c4e0" stroke-width="1.4" opacity="0.9"/>
<path d="M413.6 73.2 C414.5 70.9 414.2 62.7 418.7 59.6 C423.2 56.5 434.0 54.5 440.8 54.5 C447.6 54.5 457.2 57.3 459.5 59.6 C461.8 61.9 455.2 66.7 454.4 68.1" fill="none" stroke="#a5c4e0" stroke-width="1.4" opacity="0.9"/>
<path d="M447.6 28.9 C448.7 30.3 451.0 35.1 454.4 37.4 C457.8 39.7 465.7 41.7 468.0 42.6" fill="none" stroke="#a5c4e0" stroke-width="1.4" opacity="0.9"/>
<path d="M399.9 11.9 C402.2 12.5 409.6 13.6 413.6 15.3 C417.6 17.0 422.7 19.6 423.8 22.1 C424.9 24.7 421.0 29.2 420.4 30.6" fill="none" stroke="#a5c4e0" stroke-width="1.4" opacity="0.9"/>
<path d="M444.2 81.7 C445.9 80.6 451.6 75.5 454.4 74.9 C457.2 74.3 460.1 77.7 461.2 78.3" fill="none" stroke="#a5c4e0" stroke-width="1.4" opacity="0.9"/>
<path d="M683.7 96.7 C684.2 91.7 683.7 74.5 687.0 66.7 C690.3 58.9 698.2 53.9 703.7 50.0 C709.2 46.1 714.2 46.1 720.3 43.3 C726.4 40.5 732.5 34.4 740.3 33.3 C748.1 32.2 760.3 33.9 767.0 36.7 C773.7 39.5 775.8 48.3 780.3 50.0 C784.8 51.7 787.0 48.4 793.7 46.7 C800.4 45.0 814.8 44.5 820.3 40.0 C825.8 35.5 829.2 24.4 827.0 20.0 C824.8 15.6 810.3 14.4 807.0 13.3" fill="none" stroke="#a5c4e0" stroke-width="1.4" opacity="0.9"/>
<path d="M813.7 96.7 C817.0 97.8 829.8 98.3 833.7 103.3 C837.6 108.3 839.2 121.7 837.0 126.7 C834.8 131.7 823.1 132.2 820.3 133.3" fill="none" stroke="#a5c4e0" stroke-width="1.4" opacity="0.9"/>
<path d="M747.0 70.0 C748.1 73.3 753.7 85.0 753.7 90.0 C753.7 95.0 748.1 98.3 747.0 100.0" fill="none" stroke="#a5c4e0" stroke-width="1.4" opacity="0.9"/>
<path d="M793.7 46.7 C795.9 50.0 802.6 60.0 807.0 66.7 C811.4 73.4 819.2 81.7 820.3 86.7 C821.4 91.7 814.8 95.0 813.7 96.7" fill="none" stroke="#a5c4e0" stroke-width="1.4" opacity="0.9"/>
<path d="M657.0 33.3 C656.5 38.9 652.0 54.5 653.7 66.7 C655.4 78.9 667.6 96.7 667.0 106.7 C666.4 116.7 653.1 123.4 650.3 126.7" fill="none" stroke="#a5c4e0" stroke-width="1.4" opacity="0.9"/>
<path d="M693.7 0.0 C692.0 3.3 684.3 12.8 683.7 20.0 C683.1 27.2 689.2 39.4 690.3 43.3" fill="none" stroke="#a5c4e0" stroke-width="1.4" opacity="0.9"/>
<path d="M226.7 0.0 C227.8 2.8 230.0 12.2 233.3 16.7 C236.6 21.1 241.7 21.7 246.7 26.7 C251.7 31.7 260.0 40.0 263.3 46.7 C266.6 53.4 264.5 60.6 266.7 66.7 C268.9 72.8 272.8 77.8 276.7 83.3 C280.6 88.8 286.1 95.2 290.0 100.0 C293.9 104.8 298.3 110.0 300.0 112.0" fill="none" stroke="#a5c4e0" stroke-width="1.4" opacity="0.9"/>
<path d="M250.0 130.0 C252.0 131.3 257.8 138.3 262.0 138.0 C266.2 137.7 272.8 129.7 275.0 128.0" fill="none" stroke="#a5c4e0" stroke-width="1.4" opacity="0.9"/>
<path d="M262.0 160.0 C265.0 160.8 275.0 165.8 280.0 165.0 C285.0 164.2 290.0 156.7 292.0 155.0" fill="none" stroke="#a5c4e0" stroke-width="1.4" opacity="0.9"/>
<path d="M530.4 527.8 L539.1 520.9 L547.8 519.1 L551.2 527.8 L546.0 534.7 L539.1 529.5 Z" fill="#a5c4e0"/>
<path d="M494.1 477.6 C496.4 479.0 503.3 483.6 507.9 486.2 C512.5 488.8 517.8 491.2 521.8 493.2 C525.8 495.2 529.3 496.1 532.2 498.4 C535.1 500.7 537.4 503.8 539.1 507.0 C540.8 510.2 542.0 515.7 542.6 517.4" fill="none" stroke="#a5c4e0" stroke-width="2.5" stroke-linecap="round"/>
<path d="M700.0 845.0 C703.3 847.5 712.5 858.3 720.0 860.0 C727.5 861.7 737.5 854.2 745.0 855.0 C752.5 855.8 761.7 863.3 765.0 865.0" fill="none" stroke="#fef8e9" stroke-width="1.3" opacity="0.8"/>
<path d="M715.0 840.0 C716.7 845.0 724.2 862.5 725.0 870.0 C725.8 877.5 720.8 882.5 720.0 885.0" fill="none" stroke="#fef8e9" stroke-width="1.3" opacity="0.8"/>
<path d="M745.0 840.0 L748.0 880.0" fill="none" stroke="#fef8e9" stroke-width="1.3" opacity="0.8"/>
<path d="M697.0 868.0 C702.5 869.2 720.2 874.3 730.0 875.0 C739.8 875.7 751.7 872.5 756.0 872.0" fill="none" stroke="#fef8e9" stroke-width="1.3" opacity="0.8"/>
<path d="M760.0 845.0 L768.0 868.0" fill="none" stroke="#fef8e9" stroke-width="1.3" opacity="0.8"/>
<path d="M70.0 134.0 L76.0 138.0 L80.0 146.0 L88.0 150.0 L92.0 158.0 L100.0 163.0 L104.0 168.0 L98.0 168.0 L90.0 162.0 L84.0 156.0 L78.0 152.0 L74.0 158.0 L72.0 150.0 L74.0 144.0 Z" fill="#a5c4e0" opacity="0.9"/>
<path d="M42.0 198.0 C46.2 196.7 60.7 189.7 67.0 190.0 C73.3 190.3 77.3 196.2 80.0 200.0 C82.7 203.8 78.0 206.8 83.0 213.0 C88.0 219.2 103.3 234.5 110.0 237.0 C116.7 239.5 115.2 229.5 123.0 228.0 C130.8 226.5 146.3 227.2 157.0 228.0 C167.7 228.8 178.7 229.3 187.0 233.0 C195.3 236.7 199.3 245.0 207.0 250.0 C214.7 255.0 226.3 257.5 233.0 263.0 C239.7 268.5 242.0 277.3 247.0 283.0 C252.0 288.7 257.0 294.2 263.0 297.0 C269.0 299.8 279.7 299.5 283.0 300.0" fill="none" stroke="#cfcda2" stroke-width="4.2" stroke-linejoin="round" stroke-linecap="round"/>
<path d="M460.6 283.9 C462.4 283.4 466.5 280.3 471.4 281.2 C476.3 282.1 485.3 285.7 490.2 289.3 C495.1 292.9 497.4 298.8 501.0 302.8 C504.6 306.8 508.4 309.5 511.7 313.5 C515.0 317.5 517.8 321.4 521.0 327.0 C524.2 332.6 527.0 339.0 531.0 347.0 C535.0 355.0 542.7 370.3 545.0 375.0" fill="none" stroke="#cfcda2" stroke-width="4.2" stroke-linejoin="round" stroke-linecap="round"/>
<path d="M740.0 233.0 C739.5 236.3 740.3 248.0 737.0 253.0 C733.7 258.0 722.8 261.3 720.0 263.0" fill="none" stroke="#cfcda2" stroke-width="4.2" stroke-linejoin="round" stroke-linecap="round"/>
<path d="M710.0 273.0 C716.2 274.7 735.8 279.0 747.0 283.0 C758.2 287.0 768.2 297.0 777.0 297.0 C785.8 297.0 791.7 288.0 800.0 283.0 C808.3 278.0 820.8 275.8 827.0 267.0 C833.2 258.2 835.3 236.2 837.0 230.0" fill="none" stroke="#cfcda2" stroke-width="4.2" stroke-linejoin="round" stroke-linecap="round"/>
<path d="M777.0 297.0 C770.8 298.7 747.2 302.7 740.0 307.0 C732.8 311.3 740.0 318.7 734.0 323.0 C728.0 327.3 709.0 331.3 704.0 333.0" fill="none" stroke="#cfcda2" stroke-width="4.2" stroke-linejoin="round" stroke-linecap="round"/>
<path d="M804.0 317.0 C806.7 319.7 812.8 328.0 820.0 333.0 C827.2 338.0 838.7 341.7 847.0 347.0 C855.3 352.3 861.2 358.7 870.0 365.0 C878.8 371.3 895.0 381.7 900.0 385.0" fill="none" stroke="#cfcda2" stroke-width="4.2" stroke-linejoin="round" stroke-linecap="round"/>
<path d="M624.0 260.0 C628.3 263.8 644.0 276.3 650.0 283.0 C656.0 289.7 660.0 289.3 660.0 300.0 C660.0 310.7 651.7 339.2 650.0 347.0" fill="none" stroke="#cfcda2" stroke-width="4.2" stroke-linejoin="round" stroke-linecap="round"/>
<path d="M694.0 587.0 C695.7 581.5 700.7 566.2 704.0 554.0 C707.3 541.8 706.8 523.5 714.0 514.0 C721.2 504.5 735.3 502.0 747.0 497.0 C758.7 492.0 774.0 486.8 784.0 484.0 C794.0 481.2 803.2 482.5 807.0 480.0 C810.8 477.5 810.3 472.3 807.0 469.0 C803.7 465.7 793.2 463.2 787.0 460.0 C780.8 456.8 776.7 450.8 770.0 450.0 C763.3 449.2 750.8 454.2 747.0 455.0" fill="none" stroke="#cfcda2" stroke-width="4.2" stroke-linejoin="round" stroke-linecap="round"/>
<path d="M536.8 194.5 C539.0 196.5 545.7 202.6 550.2 206.6 C554.7 210.6 560.6 215.3 563.7 218.7 C566.9 222.1 568.2 225.5 569.1 226.8" fill="none" stroke="#cfcda2" stroke-width="4.2" stroke-linejoin="round" stroke-linecap="round"/>
<path d="M437.0 280.0 C438.2 275.5 438.3 259.7 444.0 253.0 C449.7 246.3 466.5 242.2 471.0 240.0" fill="none" stroke="#cfcda2" stroke-width="4.2" stroke-linejoin="round" stroke-linecap="round"/>
<path d="M627.0 380.0 C627.5 385.7 631.2 405.7 630.0 414.0 C628.8 422.3 621.7 427.3 620.0 430.0" fill="none" stroke="#cfcda2" stroke-width="4.2" stroke-linejoin="round" stroke-linecap="round"/>
<path d="M524.0 910.0 C526.3 907.8 531.3 900.3 538.0 897.0 C544.7 893.7 556.8 893.3 564.0 890.0 C571.2 886.7 578.2 879.2 581.0 877.0" fill="none" stroke="#cfcda2" stroke-width="4.2" stroke-linejoin="round" stroke-linecap="round"/>
<path d="M670.0 703.0 C671.7 708.7 677.7 726.3 680.0 737.0 C682.3 747.7 679.5 761.0 684.0 767.0 C688.5 773.0 701.5 774.7 707.0 773.0 C712.5 771.3 715.3 759.7 717.0 757.0" fill="none" stroke="#cfcda2" stroke-width="4.2" stroke-linejoin="round" stroke-linecap="round"/>
<path d="M330.0 480.0 L330.0 600.0" fill="none" stroke="#cfcda2" stroke-width="4.2" stroke-linejoin="round" stroke-linecap="round"/>
<path d="M352.0 470.0 L352.0 540.0" fill="none" stroke="#cfcda2" stroke-width="4.2" stroke-linejoin="round" stroke-linecap="round"/>
<path d="M365.0 470.0 L366.0 540.0" fill="none" stroke="#cfcda2" stroke-width="4.2" stroke-linejoin="round" stroke-linecap="round"/>
<path d="M290.0 505.0 L378.0 500.0" fill="none" stroke="#cfcda2" stroke-width="4.2" stroke-linejoin="round" stroke-linecap="round"/>
<path d="M292.0 530.0 L380.0 528.0" fill="none" stroke="#cfcda2" stroke-width="4.2" stroke-linejoin="round" stroke-linecap="round"/>
<path d="M296.0 575.0 L385.0 570.0" fill="none" stroke="#cfcda2" stroke-width="4.2" stroke-linejoin="round" stroke-linecap="round"/>
<path d="M340.0 600.0 L390.0 595.0" fill="none" stroke="#cfcda2" stroke-width="4.2" stroke-linejoin="round" stroke-linecap="round"/>
<path d="M288.0 490.0 L292.0 560.0" fill="none" stroke="#cfcda2" stroke-width="4.2" stroke-linejoin="round" stroke-linecap="round"/>
<path d="M560.0 460.0 C562.5 457.5 568.3 448.3 575.0 445.0 C581.7 441.7 595.8 440.8 600.0 440.0" fill="none" stroke="#cfcda2" stroke-width="4.2" stroke-linejoin="round" stroke-linecap="round"/>
<path d="M580.0 520.0 C583.3 517.5 592.5 508.3 600.0 505.0 C607.5 501.7 620.8 500.8 625.0 500.0" fill="none" stroke="#cfcda2" stroke-width="4.2" stroke-linejoin="round" stroke-linecap="round"/>
<path d="M700.0 640.0 C703.3 637.5 711.7 628.3 720.0 625.0 C728.3 621.7 745.0 620.8 750.0 620.0" fill="none" stroke="#cfcda2" stroke-width="4.2" stroke-linejoin="round" stroke-linecap="round"/>
<path d="M42.0 198.0 C46.2 196.7 60.7 189.7 67.0 190.0 C73.3 190.3 77.3 196.2 80.0 200.0 C82.7 203.8 78.0 206.8 83.0 213.0 C88.0 219.2 103.3 234.5 110.0 237.0 C116.7 239.5 115.2 229.5 123.0 228.0 C130.8 226.5 146.3 227.2 157.0 228.0 C167.7 228.8 178.7 229.3 187.0 233.0 C195.3 236.7 199.3 245.0 207.0 250.0 C214.7 255.0 226.3 257.5 233.0 263.0 C239.7 268.5 242.0 277.3 247.0 283.0 C252.0 288.7 257.0 294.2 263.0 297.0 C269.0 299.8 279.7 299.5 283.0 300.0" fill="none" stroke="#f4f2ae" stroke-width="2.6" stroke-linejoin="round" stroke-linecap="round"/>
<path d="M460.6 283.9 C462.4 283.4 466.5 280.3 471.4 281.2 C476.3 282.1 485.3 285.7 490.2 289.3 C495.1 292.9 497.4 298.8 501.0 302.8 C504.6 306.8 508.4 309.5 511.7 313.5 C515.0 317.5 517.8 321.4 521.0 327.0 C524.2 332.6 527.0 339.0 531.0 347.0 C535.0 355.0 542.7 370.3 545.0 375.0" fill="none" stroke="#f4f2ae" stroke-width="2.6" stroke-linejoin="round" stroke-linecap="round"/>
<path d="M740.0 233.0 C739.5 236.3 740.3 248.0 737.0 253.0 C733.7 258.0 722.8 261.3 720.0 263.0" fill="none" stroke="#f4f2ae" stroke-width="2.6" stroke-linejoin="round" stroke-linecap="round"/>
<path d="M710.0 273.0 C716.2 274.7 735.8 279.0 747.0 283.0 C758.2 287.0 768.2 297.0 777.0 297.0 C785.8 297.0 791.7 288.0 800.0 283.0 C808.3 278.0 820.8 275.8 827.0 267.0 C833.2 258.2 835.3 236.2 837.0 230.0" fill="none" stroke="#f4f2ae" stroke-width="2.6" stroke-linejoin="round" stroke-linecap="round"/>
<path d="M777.0 297.0 C770.8 298.7 747.2 302.7 740.0 307.0 C732.8 311.3 740.0 318.7 734.0 323.0 C728.0 327.3 709.0 331.3 704.0 333.0" fill="none" stroke="#f4f2ae" stroke-width="2.6" stroke-linejoin="round" stroke-linecap="round"/>
<path d="M804.0 317.0 C806.7 319.7 812.8 328.0 820.0 333.0 C827.2 338.0 838.7 341.7 847.0 347.0 C855.3 352.3 861.2 358.7 870.0 365.0 C878.8 371.3 895.0 381.7 900.0 385.0" fill="none" stroke="#f4f2ae" stroke-width="2.6" stroke-linejoin="round" stroke-linecap="round"/>
<path d="M624.0 260.0 C628.3 263.8 644.0 276.3 650.0 283.0 C656.0 289.7 660.0 289.3 660.0 300.0 C660.0 310.7 651.7 339.2 650.0 347.0" fill="none" stroke="#f4f2ae" stroke-width="2.6" stroke-linejoin="round" stroke-linecap="round"/>
<path d="M694.0 587.0 C695.7 581.5 700.7 566.2 704.0 554.0 C707.3 541.8 706.8 523.5 714.0 514.0 C721.2 504.5 735.3 502.0 747.0 497.0 C758.7 492.0 774.0 486.8 784.0 484.0 C794.0 481.2 803.2 482.5 807.0 480.0 C810.8 477.5 810.3 472.3 807.0 469.0 C803.7 465.7 793.2 463.2 787.0 460.0 C780.8 456.8 776.7 450.8 770.0 450.0 C763.3 449.2 750.8 454.2 747.0 455.0" fill="none" stroke="#f4f2ae" stroke-width="2.6" stroke-linejoin="round" stroke-linecap="round"/>
<path d="M536.8 194.5 C539.0 196.5 545.7 202.6 550.2 206.6 C554.7 210.6 560.6 215.3 563.7 218.7 C566.9 222.1 568.2 225.5 569.1 226.8" fill="none" stroke="#f4f2ae" stroke-width="2.6" stroke-linejoin="round" stroke-linecap="round"/>
<path d="M437.0 280.0 C438.2 275.5 438.3 259.7 444.0 253.0 C449.7 246.3 466.5 242.2 471.0 240.0" fill="none" stroke="#f4f2ae" stroke-width="2.6" stroke-linejoin="round" stroke-linecap="round"/>
<path d="M627.0 380.0 C627.5 385.7 631.2 405.7 630.0 414.0 C628.8 422.3 621.7 427.3 620.0 430.0" fill="none" stroke="#f4f2ae" stroke-width="2.6" stroke-linejoin="round" stroke-linecap="round"/>
<path d="M524.0 910.0 C526.3 907.8 531.3 900.3 538.0 897.0 C544.7 893.7 556.8 893.3 564.0 890.0 C571.2 886.7 578.2 879.2 581.0 877.0" fill="none" stroke="#f4f2ae" stroke-width="2.6" stroke-linejoin="round" stroke-linecap="round"/>
<path d="M670.0 703.0 C671.7 708.7 677.7 726.3 680.0 737.0 C682.3 747.7 679.5 761.0 684.0 767.0 C688.5 773.0 701.5 774.7 707.0 773.0 C712.5 771.3 715.3 759.7 717.0 757.0" fill="none" stroke="#f4f2ae" stroke-width="2.6" stroke-linejoin="round" stroke-linecap="round"/>
<path d="M330.0 480.0 L330.0 600.0" fill="none" stroke="#f4f2ae" stroke-width="2.6" stroke-linejoin="round" stroke-linecap="round"/>
<path d="M352.0 470.0 L352.0 540.0" fill="none" stroke="#f4f2ae" stroke-width="2.6" stroke-linejoin="round" stroke-linecap="round"/>
<path d="M365.0 470.0 L366.0 540.0" fill="none" stroke="#f4f2ae" stroke-width="2.6" stroke-linejoin="round" stroke-linecap="round"/>
<path d="M290.0 505.0 L378.0 500.0" fill="none" stroke="#f4f2ae" stroke-width="2.6" stroke-linejoin="round" stroke-linecap="round"/>
<path d="M292.0 530.0 L380.0 528.0" fill="none" stroke="#f4f2ae" stroke-width="2.6" stroke-linejoin="round" stroke-linecap="round"/>
<path d="M296.0 575.0 L385.0 570.0" fill="none" stroke="#f4f2ae" stroke-width="2.6" stroke-linejoin="round" stroke-linecap="round"/>
<path d="M340.0 600.0 L390.0 595.0" fill="none" stroke="#f4f2ae" stroke-width="2.6" stroke-linejoin="round" stroke-linecap="round"/>
<path d="M288.0 490.0 L292.0 560.0" fill="none" stroke="#f4f2ae" stroke-width="2.6" stroke-linejoin="round" stroke-linecap="round"/>
<path d="M560.0 460.0 C562.5 457.5 568.3 448.3 575.0 445.0 C581.7 441.7 595.8 440.8 600.0 440.0" fill="none" stroke="#f4f2ae" stroke-width="2.6" stroke-linejoin="round" stroke-linecap="round"/>
<path d="M580.0 520.0 C583.3 517.5 592.5 508.3 600.0 505.0 C607.5 501.7 620.8 500.8 625.0 500.0" fill="none" stroke="#f4f2ae" stroke-width="2.6" stroke-linejoin="round" stroke-linecap="round"/>
<path d="M700.0 640.0 C703.3 637.5 711.7 628.3 720.0 625.0 C728.3 621.7 745.0 620.8 750.0 620.0" fill="none" stroke="#f4f2ae" stroke-width="2.6" stroke-linejoin="round" stroke-linecap="round"/>
<path d="M0.0 132.0 C1.7 133.7 6.7 139.5 10.0 142.0 C13.3 144.5 17.0 143.5 20.0 147.0 C23.0 150.5 25.8 156.3 28.0 163.0 C30.2 169.7 30.5 180.3 33.0 187.0 C35.5 193.7 39.0 197.0 43.0 203.0 C47.0 209.0 51.3 214.7 57.0 223.0 C62.7 231.3 70.3 243.5 77.0 253.0 C83.7 262.5 91.0 271.0 97.0 280.0 C103.0 289.0 107.0 299.5 113.0 307.0 C119.0 314.5 125.7 318.3 133.0 325.0 C140.3 331.7 150.8 341.2 157.0 347.0 C163.2 352.8 165.7 355.3 170.0 360.0 C174.3 364.7 178.0 371.7 183.0 375.0 C188.0 378.3 195.0 377.5 200.0 380.0 C205.0 382.5 208.5 386.8 213.0 390.0 C217.5 393.2 222.5 399.0 227.0 399.0 C231.5 399.0 236.5 394.2 240.0 390.0 C243.5 385.8 244.7 377.0 248.0 374.0 C251.3 371.0 256.8 371.2 260.0 372.0 C263.2 372.8 263.7 377.8 267.0 379.0 C270.3 380.2 277.8 379.0 280.0 379.0" fill="none" stroke="#eaa66c" stroke-width="5" stroke-linejoin="round" stroke-linecap="round"/>
<path d="M257.0 153.0 C257.7 152.8 255.6 157.1 261.0 151.5 C266.4 145.9 284.2 125.6 289.3 119.2 C294.4 112.8 286.9 116.9 291.3 113.2 C295.7 109.5 307.2 103.9 315.5 97.0 C323.8 90.1 330.1 76.5 341.0 72.0 C351.9 67.5 368.8 67.5 381.0 70.0 C393.2 72.5 404.7 82.0 414.0 87.0 C423.3 92.0 427.5 95.7 437.0 100.0 C446.5 104.3 462.0 111.3 471.0 113.0 C480.0 114.7 487.7 110.5 491.0 110.0" fill="none" stroke="#eaa66c" stroke-width="5" stroke-linejoin="round" stroke-linecap="round"/>
<path d="M336.0 -3.0 C337.8 2.5 347.0 20.7 347.0 30.0 C347.0 39.3 337.0 46.0 336.0 53.0 C335.0 60.0 340.2 68.8 341.0 72.0" fill="none" stroke="#eaa66c" stroke-width="5" stroke-linejoin="round" stroke-linecap="round"/>
<path d="M511.0 -3.0 C511.3 11.3 512.0 60.3 513.0 83.0 C514.0 105.7 513.5 120.7 517.0 133.0 C520.5 145.3 531.2 153.0 534.0 157.0" fill="none" stroke="#eaa66c" stroke-width="5" stroke-linejoin="round" stroke-linecap="round"/>
<path d="M501.0 230.0 C504.5 229.5 516.0 226.2 522.0 226.8 C528.0 227.4 532.1 232.2 536.8 233.5 C541.5 234.8 545.7 235.6 550.2 234.9 C554.7 234.2 560.2 230.7 563.7 229.5 C567.2 228.3 569.8 228.2 571.0 228.0" fill="none" stroke="#eaa66c" stroke-width="5" stroke-linejoin="round" stroke-linecap="round"/>
<path d="M441.8 257.0 C440.0 258.1 434.8 261.2 431.0 263.7 C427.2 266.2 422.7 269.1 418.9 271.8 C415.1 274.5 409.7 276.5 408.1 279.9 C406.5 283.3 409.1 288.2 409.5 292.0 C409.9 295.8 411.5 299.7 410.8 302.8 C410.1 305.9 407.2 307.9 405.4 310.8 C403.6 313.7 400.9 318.7 400.0 320.3" fill="none" stroke="#eaa66c" stroke-width="5" stroke-linejoin="round" stroke-linecap="round"/>
<path d="M437.0 257.0 L457.0 260.0" fill="none" stroke="#eaa66c" stroke-width="5" stroke-linejoin="round" stroke-linecap="round"/>
<path d="M837.0 -3.0 C839.8 0.8 846.8 13.2 854.0 20.0 C861.2 26.8 871.5 35.0 880.0 38.0 C888.5 41.0 900.0 39.3 905.0 38.0 C910.0 36.7 909.2 36.8 910.0 30.0 C910.8 23.2 910.0 2.5 910.0 -3.0" fill="none" stroke="#eaa66c" stroke-width="5" stroke-linejoin="round" stroke-linecap="round"/>
<path d="M322.0 468.0 C321.3 473.3 319.0 488.0 318.0 500.0 C317.0 512.0 316.0 528.3 316.0 540.0 C316.0 551.7 316.5 560.0 318.0 570.0 C319.5 580.0 321.3 590.8 325.0 600.0 C328.7 609.2 334.2 618.3 340.0 625.0 C345.8 631.7 354.2 632.5 360.0 640.0 C365.8 647.5 369.8 660.5 375.0 670.0 C380.2 679.5 382.8 688.2 391.0 697.0 C399.2 705.8 412.8 714.7 424.0 723.0 C435.2 731.3 446.8 738.0 458.0 747.0 C469.2 756.0 480.0 767.7 491.0 777.0 C502.0 786.3 514.0 793.0 524.0 803.0 C534.0 813.0 542.0 827.5 551.0 837.0 C560.0 846.5 569.2 851.7 578.0 860.0 C586.8 868.3 595.2 878.2 604.0 887.0 C612.8 895.8 623.3 907.2 631.0 913.0 C638.7 918.8 641.2 918.7 650.0 922.0 C658.8 925.3 672.8 930.5 684.0 933.0 C695.2 935.5 703.2 934.7 717.0 937.0 C730.8 939.3 754.2 945.3 767.0 947.0 C779.8 948.7 789.5 947.0 794.0 947.0" fill="none" stroke="#eaa66c" stroke-width="5" stroke-linejoin="round" stroke-linecap="round"/>
<path d="M294.0 560.0 C295.0 573.3 298.0 623.3 300.0 640.0 C302.0 656.7 304.2 655.0 306.0 660.0 C307.8 665.0 312.3 666.3 311.0 670.0 C309.7 673.7 301.2 677.5 298.0 682.0 C294.8 686.5 294.0 692.7 292.0 697.0 C290.0 701.3 287.8 703.7 286.0 708.0 C284.2 712.3 281.0 716.5 281.0 723.0 C281.0 729.5 286.0 739.7 286.0 747.0 C286.0 754.3 281.0 761.0 281.0 767.0 C281.0 773.0 283.5 777.8 286.0 783.0 C288.5 788.2 291.8 794.8 296.0 798.0 C300.2 801.2 305.2 800.0 311.0 802.0 C316.8 804.0 326.0 805.8 331.0 810.0 C336.0 814.2 336.5 819.2 341.0 827.0 C345.5 834.8 354.7 845.3 358.0 857.0 C361.3 868.7 358.8 886.0 361.0 897.0 C363.2 908.0 367.7 916.3 371.0 923.0 C374.3 929.7 379.0 929.2 381.0 937.0 C383.0 944.8 381.3 961.2 383.0 970.0 C384.7 978.8 389.2 981.7 391.0 990.0 C392.8 998.3 393.5 1015.0 394.0 1020.0" fill="none" stroke="#eaa66c" stroke-width="5" stroke-linejoin="round" stroke-linecap="round"/>
<path d="M358.0 835.0 C359.7 834.2 363.7 832.5 368.0 830.0 C372.3 827.5 378.0 823.0 384.0 820.0 C390.0 817.0 399.5 812.5 404.0 812.0 C408.5 811.5 407.7 818.5 411.0 817.0 C414.3 815.5 421.2 807.0 424.0 803.0 C426.8 799.0 426.8 795.7 428.0 793.0 C429.2 790.3 430.5 788.0 431.0 787.0" fill="none" stroke="#eaa66c" stroke-width="5" stroke-linejoin="round" stroke-linecap="round"/>
<path d="M411.0 813.0 C413.2 815.3 419.0 819.7 424.0 827.0 C429.0 834.3 435.3 847.7 441.0 857.0 C446.7 866.3 453.0 873.0 458.0 883.0 C463.0 893.0 465.5 909.7 471.0 917.0 C476.5 924.3 485.5 924.3 491.0 927.0 C496.5 929.7 501.2 927.5 504.0 933.0 C506.8 938.5 504.7 952.2 508.0 960.0 C511.3 967.8 517.3 973.8 524.0 980.0 C530.7 986.2 541.3 990.3 548.0 997.0 C554.7 1003.7 561.3 1016.2 564.0 1020.0" fill="none" stroke="#eaa66c" stroke-width="5" stroke-linejoin="round" stroke-linecap="round"/>
<path d="M538.0 847.0 C537.3 850.3 537.8 861.5 534.0 867.0 C530.2 872.5 520.5 876.2 515.0 880.0 C509.5 883.8 502.2 883.8 501.0 890.0 C499.8 896.2 507.5 909.8 508.0 917.0 C508.5 924.2 504.7 930.3 504.0 933.0" fill="none" stroke="#eaa66c" stroke-width="5" stroke-linejoin="round" stroke-linecap="round"/>
<path d="M607.0 557.0 C610.3 560.8 618.7 572.2 627.0 580.0 C635.3 587.8 647.5 594.0 657.0 604.0 C666.5 614.0 675.7 629.5 684.0 640.0 C692.3 650.5 699.3 658.0 707.0 667.0 C714.7 676.0 723.0 686.0 730.0 694.0 C737.0 702.0 741.7 709.0 749.0 715.0 C756.3 721.0 767.7 725.0 774.0 730.0 C780.3 735.0 781.0 739.7 787.0 745.0 C793.0 750.3 806.2 759.2 810.0 762.0" fill="none" stroke="#eaa66c" stroke-width="5" stroke-linejoin="round" stroke-linecap="round"/>
<path d="M767.0 713.0 C770.3 709.7 780.3 695.7 787.0 693.0 C793.7 690.3 797.0 695.3 807.0 697.0 C817.0 698.7 835.8 703.7 847.0 703.0 C858.2 702.3 862.7 698.3 874.0 693.0 C885.3 687.7 908.2 674.7 915.0 671.0" fill="none" stroke="#eaa66c" stroke-width="5" stroke-linejoin="round" stroke-linecap="round"/>
<path d="M742.0 910.0 L742.0 1003.0" fill="none" stroke="#eaa66c" stroke-width="5" stroke-linejoin="round" stroke-linecap="round"/>
<path d="M770.0 937.0 L770.0 1003.0" fill="none" stroke="#eaa66c" stroke-width="5" stroke-linejoin="round" stroke-linecap="round"/>
<path d="M684.0 963.0 L794.0 967.0" fill="none" stroke="#eaa66c" stroke-width="5" stroke-linejoin="round" stroke-linecap="round"/>
<path d="M700.0 1003.0 L800.0 1000.0" fill="none" stroke="#eaa66c" stroke-width="5" stroke-linejoin="round" stroke-linecap="round"/>
<path d="M794.0 947.0 C798.3 945.8 810.7 943.7 820.0 940.0 C829.3 936.3 840.0 928.3 850.0 925.0 C860.0 921.7 875.0 920.8 880.0 920.0" fill="none" stroke="#eaa66c" stroke-width="5" stroke-linejoin="round" stroke-linecap="round"/>
<path d="M304.0 544.0 C310.0 544.0 327.2 544.0 340.0 544.0 C352.8 544.0 374.2 544.0 381.0 544.0" fill="none" stroke="#eaa66c" stroke-width="5" stroke-linejoin="round" stroke-linecap="round"/>
<path d="M317.0 467.0 L317.0 580.0" fill="none" stroke="#eaa66c" stroke-width="5" stroke-linejoin="round" stroke-linecap="round"/>
<path d="M340.0 470.0 L340.0 560.0" fill="none" stroke="#eaa66c" stroke-width="5" stroke-linejoin="round" stroke-linecap="round"/>
<path d="M290.0 520.0 L380.0 516.0" fill="none" stroke="#eaa66c" stroke-width="5" stroke-linejoin="round" stroke-linecap="round"/>
<path d="M486.0 409.0 L524.0 405.0" fill="none" stroke="#eaa66c" stroke-width="5" stroke-linejoin="round" stroke-linecap="round"/>
<path d="M521.0 517.0 C523.7 518.7 532.0 523.7 537.0 527.0 C542.0 530.3 545.3 531.5 551.0 537.0 C556.7 542.5 564.5 553.7 571.0 560.0 C577.5 566.3 586.8 572.5 590.0 575.0" fill="none" stroke="#eaa66c" stroke-width="5" stroke-linejoin="round" stroke-linecap="round"/>
<path d="M594.0 923.0 C596.8 919.7 606.5 909.7 611.0 903.0 C615.5 896.3 617.2 888.5 621.0 883.0 C624.8 877.5 631.8 872.2 634.0 870.0" fill="none" stroke="#eaa66c" stroke-width="5" stroke-linejoin="round" stroke-linecap="round"/>
<path d="M591.0 903.0 C596.5 906.3 616.8 918.0 624.0 923.0 C631.2 928.0 628.0 927.3 634.0 933.0 C640.0 938.7 651.7 948.0 660.0 957.0 C668.3 966.0 677.3 979.3 684.0 987.0 C690.7 994.7 697.3 1000.3 700.0 1003.0" fill="none" stroke="#eaa66c" stroke-width="5" stroke-linejoin="round" stroke-linecap="round"/>
<path d="M470.0 470.0 C471.3 475.0 473.0 492.5 478.0 500.0 C483.0 507.5 496.3 512.5 500.0 515.0" fill="none" stroke="#eaa66c" stroke-width="5" stroke-linejoin="round" stroke-linecap="round"/>
<path d="M0.0 132.0 C1.7 133.7 6.7 139.5 10.0 142.0 C13.3 144.5 17.0 143.5 20.0 147.0 C23.0 150.5 25.8 156.3 28.0 163.0 C30.2 169.7 30.5 180.3 33.0 187.0 C35.5 193.7 39.0 197.0 43.0 203.0 C47.0 209.0 51.3 214.7 57.0 223.0 C62.7 231.3 70.3 243.5 77.0 253.0 C83.7 262.5 91.0 271.0 97.0 280.0 C103.0 289.0 107.0 299.5 113.0 307.0 C119.0 314.5 125.7 318.3 133.0 325.0 C140.3 331.7 150.8 341.2 157.0 347.0 C163.2 352.8 165.7 355.3 170.0 360.0 C174.3 364.7 178.0 371.7 183.0 375.0 C188.0 378.3 195.0 377.5 200.0 380.0 C205.0 382.5 208.5 386.8 213.0 390.0 C217.5 393.2 222.5 399.0 227.0 399.0 C231.5 399.0 236.5 394.2 240.0 390.0 C243.5 385.8 244.7 377.0 248.0 374.0 C251.3 371.0 256.8 371.2 260.0 372.0 C263.2 372.8 263.7 377.8 267.0 379.0 C270.3 380.2 277.8 379.0 280.0 379.0" fill="none" stroke="#f7c794" stroke-width="3.2" stroke-linejoin="round" stroke-linecap="round"/>
<path d="M257.0 153.0 C257.7 152.8 255.6 157.1 261.0 151.5 C266.4 145.9 284.2 125.6 289.3 119.2 C294.4 112.8 286.9 116.9 291.3 113.2 C295.7 109.5 307.2 103.9 315.5 97.0 C323.8 90.1 330.1 76.5 341.0 72.0 C351.9 67.5 368.8 67.5 381.0 70.0 C393.2 72.5 404.7 82.0 414.0 87.0 C423.3 92.0 427.5 95.7 437.0 100.0 C446.5 104.3 462.0 111.3 471.0 113.0 C480.0 114.7 487.7 110.5 491.0 110.0" fill="none" stroke="#f7c794" stroke-width="3.2" stroke-linejoin="round" stroke-linecap="round"/>
<path d="M336.0 -3.0 C337.8 2.5 347.0 20.7 347.0 30.0 C347.0 39.3 337.0 46.0 336.0 53.0 C335.0 60.0 340.2 68.8 341.0 72.0" fill="none" stroke="#f7c794" stroke-width="3.2" stroke-linejoin="round" stroke-linecap="round"/>
<path d="M511.0 -3.0 C511.3 11.3 512.0 60.3 513.0 83.0 C514.0 105.7 513.5 120.7 517.0 133.0 C520.5 145.3 531.2 153.0 534.0 157.0" fill="none" stroke="#f7c794" stroke-width="3.2" stroke-linejoin="round" stroke-linecap="round"/>
<path d="M501.0 230.0 C504.5 229.5 516.0 226.2 522.0 226.8 C528.0 227.4 532.1 232.2 536.8 233.5 C541.5 234.8 545.7 235.6 550.2 234.9 C554.7 234.2 560.2 230.7 563.7 229.5 C567.2 228.3 569.8 228.2 571.0 228.0" fill="none" stroke="#f7c794" stroke-width="3.2" stroke-linejoin="round" stroke-linecap="round"/>
<path d="M441.8 257.0 C440.0 258.1 434.8 261.2 431.0 263.7 C427.2 266.2 422.7 269.1 418.9 271.8 C415.1 274.5 409.7 276.5 408.1 279.9 C406.5 283.3 409.1 288.2 409.5 292.0 C409.9 295.8 411.5 299.7 410.8 302.8 C410.1 305.9 407.2 307.9 405.4 310.8 C403.6 313.7 400.9 318.7 400.0 320.3" fill="none" stroke="#f7c794" stroke-width="3.2" stroke-linejoin="round" stroke-linecap="round"/>
<path d="M437.0 257.0 L457.0 260.0" fill="none" stroke="#f7c794" stroke-width="3.2" stroke-linejoin="round" stroke-linecap="round"/>
<path d="M837.0 -3.0 C839.8 0.8 846.8 13.2 854.0 20.0 C861.2 26.8 871.5 35.0 880.0 38.0 C888.5 41.0 900.0 39.3 905.0 38.0 C910.0 36.7 909.2 36.8 910.0 30.0 C910.8 23.2 910.0 2.5 910.0 -3.0" fill="none" stroke="#f7c794" stroke-width="3.2" stroke-linejoin="round" stroke-linecap="round"/>
<path d="M322.0 468.0 C321.3 473.3 319.0 488.0 318.0 500.0 C317.0 512.0 316.0 528.3 316.0 540.0 C316.0 551.7 316.5 560.0 318.0 570.0 C319.5 580.0 321.3 590.8 325.0 600.0 C328.7 609.2 334.2 618.3 340.0 625.0 C345.8 631.7 354.2 632.5 360.0 640.0 C365.8 647.5 369.8 660.5 375.0 670.0 C380.2 679.5 382.8 688.2 391.0 697.0 C399.2 705.8 412.8 714.7 424.0 723.0 C435.2 731.3 446.8 738.0 458.0 747.0 C469.2 756.0 480.0 767.7 491.0 777.0 C502.0 786.3 514.0 793.0 524.0 803.0 C534.0 813.0 542.0 827.5 551.0 837.0 C560.0 846.5 569.2 851.7 578.0 860.0 C586.8 868.3 595.2 878.2 604.0 887.0 C612.8 895.8 623.3 907.2 631.0 913.0 C638.7 918.8 641.2 918.7 650.0 922.0 C658.8 925.3 672.8 930.5 684.0 933.0 C695.2 935.5 703.2 934.7 717.0 937.0 C730.8 939.3 754.2 945.3 767.0 947.0 C779.8 948.7 789.5 947.0 794.0 947.0" fill="none" stroke="#f7c794" stroke-width="3.2" stroke-linejoin="round" stroke-linecap="round"/>
<path d="M294.0 560.0 C295.0 573.3 298.0 623.3 300.0 640.0 C302.0 656.7 304.2 655.0 306.0 660.0 C307.8 665.0 312.3 666.3 311.0 670.0 C309.7 673.7 301.2 677.5 298.0 682.0 C294.8 686.5 294.0 692.7 292.0 697.0 C290.0 701.3 287.8 703.7 286.0 708.0 C284.2 712.3 281.0 716.5 281.0 723.0 C281.0 729.5 286.0 739.7 286.0 747.0 C286.0 754.3 281.0 761.0 281.0 767.0 C281.0 773.0 283.5 777.8 286.0 783.0 C288.5 788.2 291.8 794.8 296.0 798.0 C300.2 801.2 305.2 800.0 311.0 802.0 C316.8 804.0 326.0 805.8 331.0 810.0 C336.0 814.2 336.5 819.2 341.0 827.0 C345.5 834.8 354.7 845.3 358.0 857.0 C361.3 868.7 358.8 886.0 361.0 897.0 C363.2 908.0 367.7 916.3 371.0 923.0 C374.3 929.7 379.0 929.2 381.0 937.0 C383.0 944.8 381.3 961.2 383.0 970.0 C384.7 978.8 389.2 981.7 391.0 990.0 C392.8 998.3 393.5 1015.0 394.0 1020.0" fill="none" stroke="#f7c794" stroke-width="3.2" stroke-linejoin="round" stroke-linecap="round"/>
<path d="M358.0 835.0 C359.7 834.2 363.7 832.5 368.0 830.0 C372.3 827.5 378.0 823.0 384.0 820.0 C390.0 817.0 399.5 812.5 404.0 812.0 C408.5 811.5 407.7 818.5 411.0 817.0 C414.3 815.5 421.2 807.0 424.0 803.0 C426.8 799.0 426.8 795.7 428.0 793.0 C429.2 790.3 430.5 788.0 431.0 787.0" fill="none" stroke="#f7c794" stroke-width="3.2" stroke-linejoin="round" stroke-linecap="round"/>
<path d="M411.0 813.0 C413.2 815.3 419.0 819.7 424.0 827.0 C429.0 834.3 435.3 847.7 441.0 857.0 C446.7 866.3 453.0 873.0 458.0 883.0 C463.0 893.0 465.5 909.7 471.0 917.0 C476.5 924.3 485.5 924.3 491.0 927.0 C496.5 929.7 501.2 927.5 504.0 933.0 C506.8 938.5 504.7 952.2 508.0 960.0 C511.3 967.8 517.3 973.8 524.0 980.0 C530.7 986.2 541.3 990.3 548.0 997.0 C554.7 1003.7 561.3 1016.2 564.0 1020.0" fill="none" stroke="#f7c794" stroke-width="3.2" stroke-linejoin="round" stroke-linecap="round"/>
<path d="M538.0 847.0 C537.3 850.3 537.8 861.5 534.0 867.0 C530.2 872.5 520.5 876.2 515.0 880.0 C509.5 883.8 502.2 883.8 501.0 890.0 C499.8 896.2 507.5 909.8 508.0 917.0 C508.5 924.2 504.7 930.3 504.0 933.0" fill="none" stroke="#f7c794" stroke-width="3.2" stroke-linejoin="round" stroke-linecap="round"/>
<path d="M607.0 557.0 C610.3 560.8 618.7 572.2 627.0 580.0 C635.3 587.8 647.5 594.0 657.0 604.0 C666.5 614.0 675.7 629.5 684.0 640.0 C692.3 650.5 699.3 658.0 707.0 667.0 C714.7 676.0 723.0 686.0 730.0 694.0 C737.0 702.0 741.7 709.0 749.0 715.0 C756.3 721.0 767.7 725.0 774.0 730.0 C780.3 735.0 781.0 739.7 787.0 745.0 C793.0 750.3 806.2 759.2 810.0 762.0" fill="none" stroke="#f7c794" stroke-width="3.2" stroke-linejoin="round" stroke-linecap="round"/>
<path d="M767.0 713.0 C770.3 709.7 780.3 695.7 787.0 693.0 C793.7 690.3 797.0 695.3 807.0 697.0 C817.0 698.7 835.8 703.7 847.0 703.0 C858.2 702.3 862.7 698.3 874.0 693.0 C885.3 687.7 908.2 674.7 915.0 671.0" fill="none" stroke="#f7c794" stroke-width="3.2" stroke-linejoin="round" stroke-linecap="round"/>
<path d="M742.0 910.0 L742.0 1003.0" fill="none" stroke="#f7c794" stroke-width="3.2" stroke-linejoin="round" stroke-linecap="round"/>
<path d="M770.0 937.0 L770.0 1003.0" fill="none" stroke="#f7c794" stroke-width="3.2" stroke-linejoin="round" stroke-linecap="round"/>
<path d="M684.0 963.0 L794.0 967.0" fill="none" stroke="#f7c794" stroke-width="3.2" stroke-linejoin="round" stroke-linecap="round"/>
<path d="M700.0 1003.0 L800.0 1000.0" fill="none" stroke="#f7c794" stroke-width="3.2" stroke-linejoin="round" stroke-linecap="round"/>
<path d="M794.0 947.0 C798.3 945.8 810.7 943.7 820.0 940.0 C829.3 936.3 840.0 928.3 850.0 925.0 C860.0 921.7 875.0 920.8 880.0 920.0" fill="none" stroke="#f7c794" stroke-width="3.2" stroke-linejoin="round" stroke-linecap="round"/>
<path d="M304.0 544.0 C310.0 544.0 327.2 544.0 340.0 544.0 C352.8 544.0 374.2 544.0 381.0 544.0" fill="none" stroke="#f7c794" stroke-width="3.2" stroke-linejoin="round" stroke-linecap="round"/>
<path d="M317.0 467.0 L317.0 580.0" fill="none" stroke="#f7c794" stroke-width="3.2" stroke-linejoin="round" stroke-linecap="round"/>
<path d="M340.0 470.0 L340.0 560.0" fill="none" stroke="#f7c794" stroke-width="3.2" stroke-linejoin="round" stroke-linecap="round"/>
<path d="M290.0 520.0 L380.0 516.0" fill="none" stroke="#f7c794" stroke-width="3.2" stroke-linejoin="round" stroke-linecap="round"/>
<path d="M486.0 409.0 L524.0 405.0" fill="none" stroke="#f7c794" stroke-width="3.2" stroke-linejoin="round" stroke-linecap="round"/>
<path d="M521.0 517.0 C523.7 518.7 532.0 523.7 537.0 527.0 C542.0 530.3 545.3 531.5 551.0 537.0 C556.7 542.5 564.5 553.7 571.0 560.0 C577.5 566.3 586.8 572.5 590.0 575.0" fill="none" stroke="#f7c794" stroke-width="3.2" stroke-linejoin="round" stroke-linecap="round"/>
<path d="M594.0 923.0 C596.8 919.7 606.5 909.7 611.0 903.0 C615.5 896.3 617.2 888.5 621.0 883.0 C624.8 877.5 631.8 872.2 634.0 870.0" fill="none" stroke="#f7c794" stroke-width="3.2" stroke-linejoin="round" stroke-linecap="round"/>
<path d="M591.0 903.0 C596.5 906.3 616.8 918.0 624.0 923.0 C631.2 928.0 628.0 927.3 634.0 933.0 C640.0 938.7 651.7 948.0 660.0 957.0 C668.3 966.0 677.3 979.3 684.0 987.0 C690.7 994.7 697.3 1000.3 700.0 1003.0" fill="none" stroke="#f7c794" stroke-width="3.2" stroke-linejoin="round" stroke-linecap="round"/>
<path d="M470.0 470.0 C471.3 475.0 473.0 492.5 478.0 500.0 C483.0 507.5 496.3 512.5 500.0 515.0" fill="none" stroke="#f7c794" stroke-width="3.2" stroke-linejoin="round" stroke-linecap="round"/>
<path d="M203.0 0.0 C203.8 3.3 206.8 13.3 208.0 20.0 C209.2 26.7 206.8 33.3 210.0 40.0 C213.2 46.7 222.5 53.8 227.0 60.0 C231.5 66.2 235.2 68.7 237.0 77.0 C238.8 85.3 237.2 100.7 238.0 110.0 C238.8 119.3 238.8 125.8 242.0 133.0 C245.2 140.2 252.8 145.2 257.0 153.0 C261.2 160.8 266.0 171.0 267.0 180.0 C268.0 189.0 264.5 198.2 263.0 207.0 C261.5 215.8 257.3 225.3 258.0 233.0 C258.7 240.7 263.8 245.7 267.0 253.0 C270.2 260.3 274.5 269.2 277.0 277.0 C279.5 284.8 280.5 292.0 282.0 300.0 C283.5 308.0 285.2 317.2 286.0 325.0 C286.8 332.8 287.8 342.5 287.0 347.0 C286.2 351.5 282.0 347.8 281.0 352.0 C280.0 356.2 279.7 366.0 281.0 372.0 C282.3 378.0 285.7 382.3 289.0 388.0 C292.3 393.7 297.6 400.2 301.0 406.0 C304.4 411.8 307.2 417.5 309.5 422.6 C311.8 427.7 313.1 430.6 314.5 436.7 C315.9 442.8 316.1 453.8 317.6 458.9 C319.1 463.9 319.6 465.8 323.6 467.0 C327.6 468.2 335.7 465.8 341.8 466.0 C347.9 466.2 357.0 467.7 360.0 468.0" fill="none" stroke="#f1c731" stroke-width="6.4" stroke-linejoin="round" stroke-linecap="round"/>
<path d="M283.0 300.0 C285.0 299.7 290.9 297.9 295.0 298.0 C299.1 298.1 303.1 298.2 307.5 300.3 C311.9 302.4 315.2 307.4 321.6 310.4 C328.0 313.4 338.4 316.8 345.8 318.5 C353.2 320.2 359.2 319.8 366.0 320.5 C372.8 321.2 380.6 321.5 386.3 322.6 C392.0 323.7 395.2 326.3 400.0 327.0 C404.8 327.7 410.8 326.1 414.8 327.0 C418.9 327.9 419.4 331.5 424.3 332.4 C429.2 333.3 439.2 332.8 444.4 332.4 C449.5 331.9 453.4 330.1 455.2 329.7" fill="none" stroke="#f1c731" stroke-width="6.4" stroke-linejoin="round" stroke-linecap="round"/>
<path d="M622.0 -4.0 C619.7 -1.7 614.8 3.8 608.0 10.0 C601.2 16.2 589.5 24.7 581.0 33.0 C572.5 41.3 563.2 51.7 557.0 60.0 C550.8 68.3 547.5 74.7 544.0 83.0 C540.5 91.3 537.7 99.3 536.0 110.0 C534.3 120.7 533.8 138.7 534.0 147.0 C534.2 155.3 535.7 155.7 537.0 160.0 C538.3 164.3 542.0 168.0 542.0 173.0 C542.0 178.0 541.2 183.3 537.0 190.0 C532.8 196.7 523.0 206.3 517.0 213.0 C511.0 219.7 506.0 224.3 501.0 230.0 C496.0 235.7 492.7 242.5 487.0 247.0 C481.3 251.5 471.6 254.0 467.0 257.0 C462.4 260.0 461.0 261.0 459.3 265.0 C457.6 269.0 458.4 275.8 456.6 281.2 C454.8 286.6 448.9 292.5 448.5 297.4 C448.1 302.3 452.8 305.9 453.9 310.8 C455.0 315.7 454.3 322.1 455.2 327.0 C456.1 331.9 457.5 335.0 459.3 340.4 C461.1 345.8 464.7 353.0 466.0 359.3 C467.3 365.6 466.8 371.8 467.3 378.1 C467.8 384.4 467.4 391.0 469.0 397.0 C470.6 403.0 474.2 406.8 477.0 414.0 C479.8 421.2 483.7 432.8 486.0 440.0 C488.3 447.2 490.2 454.2 491.0 457.0" fill="none" stroke="#f1c731" stroke-width="6.4" stroke-linejoin="round" stroke-linecap="round"/>
<path d="M491.0 457.0 C494.3 460.3 503.3 470.8 511.0 477.0 C518.7 483.2 529.3 487.8 537.0 494.0 C544.7 500.2 550.3 507.3 557.0 514.0 C563.7 520.7 571.3 527.3 577.0 534.0 C582.7 540.7 586.0 547.2 591.0 554.0 C596.0 560.8 602.2 568.7 607.0 575.0 C611.8 581.3 614.5 585.5 620.0 592.0 C625.5 598.5 634.3 606.0 640.0 614.0 C645.7 622.0 649.0 631.2 654.0 640.0 C659.0 648.8 665.0 658.0 670.0 667.0 C675.0 676.0 680.7 687.3 684.0 694.0 C687.3 700.7 686.7 701.0 690.0 707.0 C693.3 713.0 699.5 722.3 704.0 730.0 C708.5 737.7 711.0 746.3 717.0 753.0 C723.0 759.7 732.2 763.3 740.0 770.0 C747.8 776.7 756.2 785.8 764.0 793.0 C771.8 800.2 780.3 805.7 787.0 813.0 C793.7 820.3 800.2 828.7 804.0 837.0 C807.8 845.3 808.2 855.3 810.0 863.0 C811.8 870.7 813.3 874.0 815.0 883.0 C816.7 892.0 818.3 905.8 820.0 917.0 C821.7 928.2 822.2 941.2 825.0 950.0 C827.8 958.8 831.7 963.3 837.0 970.0 C842.3 976.7 849.2 982.2 857.0 990.0 C864.8 997.8 879.5 1012.5 884.0 1017.0" fill="none" stroke="#f1c731" stroke-width="6.4" stroke-linejoin="round" stroke-linecap="round"/>
<path d="M617.0 -5.0 C617.0 0.3 615.3 17.8 617.0 27.0 C618.7 36.2 623.2 41.7 627.0 50.0 C630.8 58.3 637.2 68.7 640.0 77.0 C642.8 85.3 643.2 91.7 644.0 100.0 C644.8 108.3 646.2 118.7 645.0 127.0 C643.8 135.3 640.5 142.8 637.0 150.0 C633.5 157.2 626.8 165.0 624.0 170.0 C621.2 175.0 619.0 175.5 620.0 180.0 C621.0 184.5 626.0 191.5 630.0 197.0 C634.0 202.5 639.5 208.0 644.0 213.0 C648.5 218.0 652.7 222.0 657.0 227.0 C661.3 232.0 666.3 238.7 670.0 243.0 C673.7 247.3 677.0 248.0 679.0 253.0 C681.0 258.0 680.2 266.8 682.0 273.0 C683.8 279.2 688.8 283.8 690.0 290.0 C691.2 296.2 689.8 302.8 689.0 310.0 C688.2 317.2 686.2 326.8 685.0 333.0 C683.8 339.2 682.2 342.5 682.0 347.0 C681.8 351.5 681.5 354.5 684.0 360.0 C686.5 365.5 692.0 371.7 697.0 380.0 C702.0 388.3 706.8 400.5 714.0 410.0 C721.2 419.5 734.8 429.2 740.0 437.0 C745.2 444.8 742.2 448.7 745.0 457.0 C747.8 465.3 752.2 476.5 757.0 487.0 C761.8 497.5 767.8 508.8 774.0 520.0 C780.2 531.2 788.5 544.0 794.0 554.0 C799.5 564.0 803.2 570.0 807.0 580.0 C810.8 590.0 812.5 604.5 817.0 614.0 C821.5 623.5 829.3 628.7 834.0 637.0 C838.7 645.3 841.8 655.2 845.0 664.0 C848.2 672.8 852.7 681.8 853.0 690.0 C853.3 698.2 852.5 705.8 847.0 713.0 C841.5 720.2 828.3 725.2 820.0 733.0 C811.7 740.8 802.8 753.3 797.0 760.0 C791.2 766.7 786.2 768.0 785.0 773.0 C783.8 778.0 786.3 783.3 790.0 790.0 C793.7 796.7 801.3 804.7 807.0 813.0 C812.7 821.3 819.0 831.7 824.0 840.0 C829.0 848.3 833.7 853.5 837.0 863.0 C840.3 872.5 841.2 886.3 844.0 897.0 C846.8 907.7 849.0 918.7 854.0 927.0 C859.0 935.3 867.3 939.8 874.0 947.0 C880.7 954.2 887.2 962.5 894.0 970.0 C900.8 977.5 911.5 988.3 915.0 992.0" fill="none" stroke="#f1c731" stroke-width="6.4" stroke-linejoin="round" stroke-linecap="round"/>
<path d="M491.0 110.0 C493.2 107.8 499.7 101.5 504.0 97.0 C508.3 92.5 510.3 85.3 517.0 83.0 C523.7 80.7 539.5 83.0 544.0 83.0" fill="none" stroke="#f1c731" stroke-width="6.4" stroke-linejoin="round" stroke-linecap="round"/>
<path d="M535.0 142.0 C539.8 143.3 556.7 146.3 563.7 150.1 C570.7 153.9 570.4 160.9 577.1 164.9 C583.8 168.9 598.6 171.5 604.1 174.3 C609.6 177.2 607.4 180.6 610.0 182.0 C612.6 183.4 618.3 182.8 620.0 183.0" fill="none" stroke="#f1c731" stroke-width="6.4" stroke-linejoin="round" stroke-linecap="round"/>
<path d="M571.0 228.0 C573.7 228.3 580.8 226.8 587.0 230.0 C593.2 233.2 602.5 242.5 608.0 247.0 C613.5 251.5 615.2 256.8 620.0 257.0 C624.8 257.2 630.8 248.3 637.0 248.0 C643.2 247.7 650.0 254.2 657.0 255.0 C664.0 255.8 672.8 255.5 679.0 253.0 C685.2 250.5 687.7 243.3 694.0 240.0 C700.3 236.7 709.3 235.2 717.0 233.0 C724.7 230.8 732.8 229.5 740.0 227.0 C747.2 224.5 753.3 218.7 760.0 218.0 C766.7 217.3 772.2 222.2 780.0 223.0 C787.8 223.8 797.0 222.2 807.0 223.0 C817.0 223.8 830.0 226.0 840.0 228.0 C850.0 230.0 858.0 232.2 867.0 235.0 C876.0 237.8 886.0 243.0 894.0 245.0 C902.0 247.0 911.5 246.7 915.0 247.0" fill="none" stroke="#f1c731" stroke-width="6.4" stroke-linejoin="round" stroke-linecap="round"/>
<path d="M705.0 243.0 C704.5 247.0 703.7 259.2 702.0 267.0 C700.3 274.8 696.2 286.2 695.0 290.0" fill="none" stroke="#f1c731" stroke-width="6.4" stroke-linejoin="round" stroke-linecap="round"/>
<path d="M504.0 430.0 C505.2 427.8 505.5 420.8 511.0 417.0 C516.5 413.2 530.3 410.3 537.0 407.0 C543.7 403.7 547.2 400.7 551.0 397.0 C554.8 393.3 554.3 389.5 560.0 385.0 C565.7 380.5 575.0 373.3 585.0 370.0 C595.0 366.7 609.7 366.5 620.0 365.0 C630.3 363.5 638.3 361.8 647.0 361.0 C655.7 360.2 665.8 360.2 672.0 360.0 C678.2 359.8 682.0 360.0 684.0 360.0" fill="none" stroke="#f1c731" stroke-width="6.4" stroke-linejoin="round" stroke-linecap="round"/>
<path d="M551.0 397.0 C549.8 402.0 541.8 417.5 544.0 427.0 C546.2 436.5 558.5 445.2 564.0 454.0 C569.5 462.8 572.0 473.3 577.0 480.0 C582.0 486.7 591.2 491.7 594.0 494.0" fill="none" stroke="#f1c731" stroke-width="6.4" stroke-linejoin="round" stroke-linecap="round"/>
<path d="M491.0 440.0 C494.3 441.2 504.3 443.7 511.0 447.0 C517.7 450.3 524.3 455.5 531.0 460.0 C537.7 464.5 544.3 469.5 551.0 474.0 C557.7 478.5 564.3 482.0 571.0 487.0 C577.7 492.0 585.0 499.5 591.0 504.0 C597.0 508.5 603.2 508.5 607.0 514.0 C610.8 519.5 610.7 529.3 614.0 537.0 C617.3 544.7 622.0 552.8 627.0 560.0 C632.0 567.2 639.0 575.0 644.0 580.0 C649.0 585.0 648.7 588.8 657.0 590.0 C665.3 591.2 685.7 589.2 694.0 587.0 C702.3 584.8 699.3 578.7 707.0 577.0 C714.7 575.3 730.0 575.8 740.0 577.0 C750.0 578.2 758.0 583.5 767.0 584.0 C776.0 584.5 781.8 580.8 794.0 580.0 C806.2 579.2 819.8 579.2 840.0 579.0 C860.2 578.8 902.5 579.0 915.0 579.0" fill="none" stroke="#f1c731" stroke-width="6.4" stroke-linejoin="round" stroke-linecap="round"/>
<path d="M618.0 590.0 C621.2 590.8 630.5 595.0 637.0 595.0 C643.5 595.0 653.7 590.8 657.0 590.0" fill="none" stroke="#f1c731" stroke-width="6.4" stroke-linejoin="round" stroke-linecap="round"/>
<path d="M381.0 490.0 C383.7 486.7 391.0 477.2 397.0 470.0 C403.0 462.8 410.3 451.7 417.0 447.0 C423.7 442.3 430.8 443.2 437.0 442.0 C443.2 440.8 447.3 440.8 454.0 440.0 C460.7 439.2 471.7 437.0 477.0 437.0 C482.3 437.0 484.5 439.5 486.0 440.0" fill="none" stroke="#f1c731" stroke-width="6.4" stroke-linejoin="round" stroke-linecap="round"/>
<path d="M381.0 490.0 C381.0 492.3 381.0 495.7 381.0 504.0 C381.0 512.3 380.0 529.5 381.0 540.0 C382.0 550.5 384.8 557.0 387.0 567.0 C389.2 577.0 393.3 592.2 394.0 600.0 C394.7 607.8 393.2 609.0 391.0 614.0 C388.8 619.0 383.3 624.5 381.0 630.0 C378.7 635.5 376.5 640.8 377.0 647.0 C377.5 653.2 381.7 659.8 384.0 667.0 C386.3 674.2 387.5 684.8 391.0 690.0 C394.5 695.2 399.5 695.8 405.0 698.0 C410.5 700.2 416.3 701.5 424.0 703.0 C431.7 704.5 443.7 702.0 451.0 707.0 C458.3 712.0 461.3 723.7 468.0 733.0 C474.7 742.3 483.3 753.5 491.0 763.0 C498.7 772.5 506.2 781.7 514.0 790.0 C521.8 798.3 529.7 808.0 538.0 813.0 C546.3 818.0 555.2 817.2 564.0 820.0 C572.8 822.8 582.0 825.5 591.0 830.0 C600.0 834.5 610.2 840.8 618.0 847.0 C625.8 853.2 631.3 860.3 638.0 867.0 C644.7 873.7 652.0 880.7 658.0 887.0 C664.0 893.3 666.3 899.5 674.0 905.0 C681.7 910.5 693.0 915.8 704.0 920.0 C715.0 924.2 728.3 927.2 740.0 930.0 C751.7 932.8 762.8 934.2 774.0 937.0 C785.2 939.8 798.2 944.3 807.0 947.0 C815.8 949.7 819.2 950.8 827.0 953.0 C834.8 955.2 846.2 957.2 854.0 960.0 C861.8 962.8 868.0 965.0 874.0 970.0 C880.0 975.0 885.7 981.7 890.0 990.0 C894.3 998.3 898.3 1015.0 900.0 1020.0" fill="none" stroke="#f1c731" stroke-width="6.4" stroke-linejoin="round" stroke-linecap="round"/>
<path d="M381.0 544.0 C376.5 544.5 360.7 544.3 354.0 547.0 C347.3 549.7 346.0 555.5 341.0 560.0 C336.0 564.5 327.3 568.3 324.0 574.0 C320.7 579.7 320.5 586.3 321.0 594.0 C321.5 601.7 323.2 611.2 327.0 620.0 C330.8 628.8 338.8 638.7 344.0 647.0 C349.2 655.3 354.7 662.8 358.0 670.0 C361.3 677.2 360.2 682.8 364.0 690.0 C367.8 697.2 375.3 705.8 381.0 713.0 C386.7 720.2 393.0 726.3 398.0 733.0 C403.0 739.7 405.5 744.0 411.0 753.0 C416.5 762.0 424.8 779.2 431.0 787.0 C437.2 794.8 441.3 796.2 448.0 800.0 C454.7 803.8 465.5 803.8 471.0 810.0 C476.5 816.2 477.2 828.7 481.0 837.0 C484.8 845.3 487.8 853.3 494.0 860.0 C500.2 866.7 511.3 872.5 518.0 877.0 C524.7 881.5 527.3 882.7 534.0 887.0 C540.7 891.3 550.7 897.5 558.0 903.0 C565.3 908.5 571.3 915.5 578.0 920.0 C584.7 924.5 592.5 925.8 598.0 930.0 C603.5 934.2 605.5 940.5 611.0 945.0 C616.5 949.5 624.5 952.8 631.0 957.0 C637.5 961.2 642.8 965.0 650.0 970.0 C657.2 975.0 664.5 983.7 674.0 987.0 C683.5 990.3 694.8 987.3 707.0 990.0 C719.2 992.7 733.7 999.7 747.0 1003.0 C760.3 1006.3 775.8 1010.0 787.0 1010.0 C798.2 1010.0 807.3 1006.3 814.0 1003.0 C820.7 999.7 824.8 995.5 827.0 990.0 C829.2 984.5 827.0 976.2 827.0 970.0 C827.0 963.8 827.0 955.8 827.0 953.0" fill="none" stroke="#f1c731" stroke-width="6.4" stroke-linejoin="round" stroke-linecap="round"/>
<path d="M444.0 790.0 C444.7 786.7 446.5 776.3 448.0 770.0 C449.5 763.7 449.7 757.0 453.0 752.0 C456.3 747.0 462.2 742.5 468.0 740.0 C473.8 737.5 484.2 738.3 488.0 737.0 C491.8 735.7 485.5 738.2 491.0 732.0 C496.5 725.8 509.8 707.5 521.0 700.0 C532.2 692.5 544.2 692.2 558.0 687.0 C571.8 681.8 591.2 674.2 604.0 669.0 C616.8 663.8 626.7 660.0 635.0 656.0 C643.3 652.0 650.8 646.8 654.0 645.0" fill="none" stroke="#f1c731" stroke-width="6.4" stroke-linejoin="round" stroke-linecap="round"/>
<path d="M598.0 832.0 C600.7 828.7 607.5 820.0 614.0 812.0 C620.5 804.0 630.3 791.3 637.0 784.0 C643.7 776.7 647.8 771.8 654.0 768.0 C660.2 764.2 668.0 764.5 674.0 761.0 C680.0 757.5 685.0 751.7 690.0 747.0 C695.0 742.3 701.7 735.3 704.0 733.0" fill="none" stroke="#f1c731" stroke-width="6.4" stroke-linejoin="round" stroke-linecap="round"/>
<path d="M814.0 887.0 C810.7 888.0 802.3 891.3 794.0 893.0 C785.7 894.7 773.0 895.3 764.0 897.0 C755.0 898.7 748.3 900.3 740.0 903.0 C731.7 905.7 721.7 910.7 714.0 913.0 C706.3 915.3 700.7 917.5 694.0 917.0 C687.3 916.5 677.3 911.2 674.0 910.0" fill="none" stroke="#f1c731" stroke-width="6.4" stroke-linejoin="round" stroke-linecap="round"/>
<path d="M674.0 910.0 C675.7 914.5 681.8 927.0 684.0 937.0 C686.2 947.0 686.0 961.2 687.0 970.0 C688.0 978.8 690.0 981.7 690.0 990.0 C690.0 998.3 687.5 1015.0 687.0 1020.0" fill="none" stroke="#f1c731" stroke-width="6.4" stroke-linejoin="round" stroke-linecap="round"/>
<path d="M827.0 953.0 C825.8 955.8 823.8 965.0 820.0 970.0 C816.2 975.0 808.3 977.5 804.0 983.0 C799.7 988.5 796.8 996.8 794.0 1003.0 C791.2 1009.2 788.2 1017.2 787.0 1020.0" fill="none" stroke="#f1c731" stroke-width="6.4" stroke-linejoin="round" stroke-linecap="round"/>
<path d="M827.0 970.0 C829.2 973.3 836.2 981.7 840.0 990.0 C843.8 998.3 848.3 1015.0 850.0 1020.0" fill="none" stroke="#f1c731" stroke-width="6.4" stroke-linejoin="round" stroke-linecap="round"/>
<path d="M455.0 747.0 C453.2 748.7 445.2 751.0 444.0 757.0 C442.8 763.0 447.3 778.7 448.0 783.0" fill="none" stroke="#f1c731" stroke-width="6.4" stroke-linejoin="round" stroke-linecap="round"/>
<path d="M203.0 0.0 C203.8 3.3 206.8 13.3 208.0 20.0 C209.2 26.7 206.8 33.3 210.0 40.0 C213.2 46.7 222.5 53.8 227.0 60.0 C231.5 66.2 235.2 68.7 237.0 77.0 C238.8 85.3 237.2 100.7 238.0 110.0 C238.8 119.3 238.8 125.8 242.0 133.0 C245.2 140.2 252.8 145.2 257.0 153.0 C261.2 160.8 266.0 171.0 267.0 180.0 C268.0 189.0 264.5 198.2 263.0 207.0 C261.5 215.8 257.3 225.3 258.0 233.0 C258.7 240.7 263.8 245.7 267.0 253.0 C270.2 260.3 274.5 269.2 277.0 277.0 C279.5 284.8 280.5 292.0 282.0 300.0 C283.5 308.0 285.2 317.2 286.0 325.0 C286.8 332.8 287.8 342.5 287.0 347.0 C286.2 351.5 282.0 347.8 281.0 352.0 C280.0 356.2 279.7 366.0 281.0 372.0 C282.3 378.0 285.7 382.3 289.0 388.0 C292.3 393.7 297.6 400.2 301.0 406.0 C304.4 411.8 307.2 417.5 309.5 422.6 C311.8 427.7 313.1 430.6 314.5 436.7 C315.9 442.8 316.1 453.8 317.6 458.9 C319.1 463.9 319.6 465.8 323.6 467.0 C327.6 468.2 335.7 465.8 341.8 466.0 C347.9 466.2 357.0 467.7 360.0 468.0" fill="none" stroke="#fbd828" stroke-width="4.8" stroke-linejoin="round" stroke-linecap="round"/>
<path d="M283.0 300.0 C285.0 299.7 290.9 297.9 295.0 298.0 C299.1 298.1 303.1 298.2 307.5 300.3 C311.9 302.4 315.2 307.4 321.6 310.4 C328.0 313.4 338.4 316.8 345.8 318.5 C353.2 320.2 359.2 319.8 366.0 320.5 C372.8 321.2 380.6 321.5 386.3 322.6 C392.0 323.7 395.2 326.3 400.0 327.0 C404.8 327.7 410.8 326.1 414.8 327.0 C418.9 327.9 419.4 331.5 424.3 332.4 C429.2 333.3 439.2 332.8 444.4 332.4 C449.5 331.9 453.4 330.1 455.2 329.7" fill="none" stroke="#fbd828" stroke-width="4.8" stroke-linejoin="round" stroke-linecap="round"/>
<path d="M622.0 -4.0 C619.7 -1.7 614.8 3.8 608.0 10.0 C601.2 16.2 589.5 24.7 581.0 33.0 C572.5 41.3 563.2 51.7 557.0 60.0 C550.8 68.3 547.5 74.7 544.0 83.0 C540.5 91.3 537.7 99.3 536.0 110.0 C534.3 120.7 533.8 138.7 534.0 147.0 C534.2 155.3 535.7 155.7 537.0 160.0 C538.3 164.3 542.0 168.0 542.0 173.0 C542.0 178.0 541.2 183.3 537.0 190.0 C532.8 196.7 523.0 206.3 517.0 213.0 C511.0 219.7 506.0 224.3 501.0 230.0 C496.0 235.7 492.7 242.5 487.0 247.0 C481.3 251.5 471.6 254.0 467.0 257.0 C462.4 260.0 461.0 261.0 459.3 265.0 C457.6 269.0 458.4 275.8 456.6 281.2 C454.8 286.6 448.9 292.5 448.5 297.4 C448.1 302.3 452.8 305.9 453.9 310.8 C455.0 315.7 454.3 322.1 455.2 327.0 C456.1 331.9 457.5 335.0 459.3 340.4 C461.1 345.8 464.7 353.0 466.0 359.3 C467.3 365.6 466.8 371.8 467.3 378.1 C467.8 384.4 467.4 391.0 469.0 397.0 C470.6 403.0 474.2 406.8 477.0 414.0 C479.8 421.2 483.7 432.8 486.0 440.0 C488.3 447.2 490.2 454.2 491.0 457.0" fill="none" stroke="#fbd828" stroke-width="4.8" stroke-linejoin="round" stroke-linecap="round"/>
<path d="M491.0 457.0 C494.3 460.3 503.3 470.8 511.0 477.0 C518.7 483.2 529.3 487.8 537.0 494.0 C544.7 500.2 550.3 507.3 557.0 514.0 C563.7 520.7 571.3 527.3 577.0 534.0 C582.7 540.7 586.0 547.2 591.0 554.0 C596.0 560.8 602.2 568.7 607.0 575.0 C611.8 581.3 614.5 585.5 620.0 592.0 C625.5 598.5 634.3 606.0 640.0 614.0 C645.7 622.0 649.0 631.2 654.0 640.0 C659.0 648.8 665.0 658.0 670.0 667.0 C675.0 676.0 680.7 687.3 684.0 694.0 C687.3 700.7 686.7 701.0 690.0 707.0 C693.3 713.0 699.5 722.3 704.0 730.0 C708.5 737.7 711.0 746.3 717.0 753.0 C723.0 759.7 732.2 763.3 740.0 770.0 C747.8 776.7 756.2 785.8 764.0 793.0 C771.8 800.2 780.3 805.7 787.0 813.0 C793.7 820.3 800.2 828.7 804.0 837.0 C807.8 845.3 808.2 855.3 810.0 863.0 C811.8 870.7 813.3 874.0 815.0 883.0 C816.7 892.0 818.3 905.8 820.0 917.0 C821.7 928.2 822.2 941.2 825.0 950.0 C827.8 958.8 831.7 963.3 837.0 970.0 C842.3 976.7 849.2 982.2 857.0 990.0 C864.8 997.8 879.5 1012.5 884.0 1017.0" fill="none" stroke="#fbd828" stroke-width="4.8" stroke-linejoin="round" stroke-linecap="round"/>
<path d="M617.0 -5.0 C617.0 0.3 615.3 17.8 617.0 27.0 C618.7 36.2 623.2 41.7 627.0 50.0 C630.8 58.3 637.2 68.7 640.0 77.0 C642.8 85.3 643.2 91.7 644.0 100.0 C644.8 108.3 646.2 118.7 645.0 127.0 C643.8 135.3 640.5 142.8 637.0 150.0 C633.5 157.2 626.8 165.0 624.0 170.0 C621.2 175.0 619.0 175.5 620.0 180.0 C621.0 184.5 626.0 191.5 630.0 197.0 C634.0 202.5 639.5 208.0 644.0 213.0 C648.5 218.0 652.7 222.0 657.0 227.0 C661.3 232.0 666.3 238.7 670.0 243.0 C673.7 247.3 677.0 248.0 679.0 253.0 C681.0 258.0 680.2 266.8 682.0 273.0 C683.8 279.2 688.8 283.8 690.0 290.0 C691.2 296.2 689.8 302.8 689.0 310.0 C688.2 317.2 686.2 326.8 685.0 333.0 C683.8 339.2 682.2 342.5 682.0 347.0 C681.8 351.5 681.5 354.5 684.0 360.0 C686.5 365.5 692.0 371.7 697.0 380.0 C702.0 388.3 706.8 400.5 714.0 410.0 C721.2 419.5 734.8 429.2 740.0 437.0 C745.2 444.8 742.2 448.7 745.0 457.0 C747.8 465.3 752.2 476.5 757.0 487.0 C761.8 497.5 767.8 508.8 774.0 520.0 C780.2 531.2 788.5 544.0 794.0 554.0 C799.5 564.0 803.2 570.0 807.0 580.0 C810.8 590.0 812.5 604.5 817.0 614.0 C821.5 623.5 829.3 628.7 834.0 637.0 C838.7 645.3 841.8 655.2 845.0 664.0 C848.2 672.8 852.7 681.8 853.0 690.0 C853.3 698.2 852.5 705.8 847.0 713.0 C841.5 720.2 828.3 725.2 820.0 733.0 C811.7 740.8 802.8 753.3 797.0 760.0 C791.2 766.7 786.2 768.0 785.0 773.0 C783.8 778.0 786.3 783.3 790.0 790.0 C793.7 796.7 801.3 804.7 807.0 813.0 C812.7 821.3 819.0 831.7 824.0 840.0 C829.0 848.3 833.7 853.5 837.0 863.0 C840.3 872.5 841.2 886.3 844.0 897.0 C846.8 907.7 849.0 918.7 854.0 927.0 C859.0 935.3 867.3 939.8 874.0 947.0 C880.7 954.2 887.2 962.5 894.0 970.0 C900.8 977.5 911.5 988.3 915.0 992.0" fill="none" stroke="#fbd828" stroke-width="4.8" stroke-linejoin="round" stroke-linecap="round"/>
<path d="M491.0 110.0 C493.2 107.8 499.7 101.5 504.0 97.0 C508.3 92.5 510.3 85.3 517.0 83.0 C523.7 80.7 539.5 83.0 544.0 83.0" fill="none" stroke="#fbd828" stroke-width="4.8" stroke-linejoin="round" stroke-linecap="round"/>
<path d="M535.0 142.0 C539.8 143.3 556.7 146.3 563.7 150.1 C570.7 153.9 570.4 160.9 577.1 164.9 C583.8 168.9 598.6 171.5 604.1 174.3 C609.6 177.2 607.4 180.6 610.0 182.0 C612.6 183.4 618.3 182.8 620.0 183.0" fill="none" stroke="#fbd828" stroke-width="4.8" stroke-linejoin="round" stroke-linecap="round"/>
<path d="M571.0 228.0 C573.7 228.3 580.8 226.8 587.0 230.0 C593.2 233.2 602.5 242.5 608.0 247.0 C613.5 251.5 615.2 256.8 620.0 257.0 C624.8 257.2 630.8 248.3 637.0 248.0 C643.2 247.7 650.0 254.2 657.0 255.0 C664.0 255.8 672.8 255.5 679.0 253.0 C685.2 250.5 687.7 243.3 694.0 240.0 C700.3 236.7 709.3 235.2 717.0 233.0 C724.7 230.8 732.8 229.5 740.0 227.0 C747.2 224.5 753.3 218.7 760.0 218.0 C766.7 217.3 772.2 222.2 780.0 223.0 C787.8 223.8 797.0 222.2 807.0 223.0 C817.0 223.8 830.0 226.0 840.0 228.0 C850.0 230.0 858.0 232.2 867.0 235.0 C876.0 237.8 886.0 243.0 894.0 245.0 C902.0 247.0 911.5 246.7 915.0 247.0" fill="none" stroke="#fbd828" stroke-width="4.8" stroke-linejoin="round" stroke-linecap="round"/>
<path d="M705.0 243.0 C704.5 247.0 703.7 259.2 702.0 267.0 C700.3 274.8 696.2 286.2 695.0 290.0" fill="none" stroke="#fbd828" stroke-width="4.8" stroke-linejoin="round" stroke-linecap="round"/>
<path d="M504.0 430.0 C505.2 427.8 505.5 420.8 511.0 417.0 C516.5 413.2 530.3 410.3 537.0 407.0 C543.7 403.7 547.2 400.7 551.0 397.0 C554.8 393.3 554.3 389.5 560.0 385.0 C565.7 380.5 575.0 373.3 585.0 370.0 C595.0 366.7 609.7 366.5 620.0 365.0 C630.3 363.5 638.3 361.8 647.0 361.0 C655.7 360.2 665.8 360.2 672.0 360.0 C678.2 359.8 682.0 360.0 684.0 360.0" fill="none" stroke="#fbd828" stroke-width="4.8" stroke-linejoin="round" stroke-linecap="round"/>
<path d="M551.0 397.0 C549.8 402.0 541.8 417.5 544.0 427.0 C546.2 436.5 558.5 445.2 564.0 454.0 C569.5 462.8 572.0 473.3 577.0 480.0 C582.0 486.7 591.2 491.7 594.0 494.0" fill="none" stroke="#fbd828" stroke-width="4.8" stroke-linejoin="round" stroke-linecap="round"/>
<path d="M491.0 440.0 C494.3 441.2 504.3 443.7 511.0 447.0 C517.7 450.3 524.3 455.5 531.0 460.0 C537.7 464.5 544.3 469.5 551.0 474.0 C557.7 478.5 564.3 482.0 571.0 487.0 C577.7 492.0 585.0 499.5 591.0 504.0 C597.0 508.5 603.2 508.5 607.0 514.0 C610.8 519.5 610.7 529.3 614.0 537.0 C617.3 544.7 622.0 552.8 627.0 560.0 C632.0 567.2 639.0 575.0 644.0 580.0 C649.0 585.0 648.7 588.8 657.0 590.0 C665.3 591.2 685.7 589.2 694.0 587.0 C702.3 584.8 699.3 578.7 707.0 577.0 C714.7 575.3 730.0 575.8 740.0 577.0 C750.0 578.2 758.0 583.5 767.0 584.0 C776.0 584.5 781.8 580.8 794.0 580.0 C806.2 579.2 819.8 579.2 840.0 579.0 C860.2 578.8 902.5 579.0 915.0 579.0" fill="none" stroke="#fbd828" stroke-width="4.8" stroke-linejoin="round" stroke-linecap="round"/>
<path d="M618.0 590.0 C621.2 590.8 630.5 595.0 637.0 595.0 C643.5 595.0 653.7 590.8 657.0 590.0" fill="none" stroke="#fbd828" stroke-width="4.8" stroke-linejoin="round" stroke-linecap="round"/>
<path d="M381.0 490.0 C383.7 486.7 391.0 477.2 397.0 470.0 C403.0 462.8 410.3 451.7 417.0 447.0 C423.7 442.3 430.8 443.2 437.0 442.0 C443.2 440.8 447.3 440.8 454.0 440.0 C460.7 439.2 471.7 437.0 477.0 437.0 C482.3 437.0 484.5 439.5 486.0 440.0" fill="none" stroke="#fbd828" stroke-width="4.8" stroke-linejoin="round" stroke-linecap="round"/>
<path d="M381.0 490.0 C381.0 492.3 381.0 495.7 381.0 504.0 C381.0 512.3 380.0 529.5 381.0 540.0 C382.0 550.5 384.8 557.0 387.0 567.0 C389.2 577.0 393.3 592.2 394.0 600.0 C394.7 607.8 393.2 609.0 391.0 614.0 C388.8 619.0 383.3 624.5 381.0 630.0 C378.7 635.5 376.5 640.8 377.0 647.0 C377.5 653.2 381.7 659.8 384.0 667.0 C386.3 674.2 387.5 684.8 391.0 690.0 C394.5 695.2 399.5 695.8 405.0 698.0 C410.5 700.2 416.3 701.5 424.0 703.0 C431.7 704.5 443.7 702.0 451.0 707.0 C458.3 712.0 461.3 723.7 468.0 733.0 C474.7 742.3 483.3 753.5 491.0 763.0 C498.7 772.5 506.2 781.7 514.0 790.0 C521.8 798.3 529.7 808.0 538.0 813.0 C546.3 818.0 555.2 817.2 564.0 820.0 C572.8 822.8 582.0 825.5 591.0 830.0 C600.0 834.5 610.2 840.8 618.0 847.0 C625.8 853.2 631.3 860.3 638.0 867.0 C644.7 873.7 652.0 880.7 658.0 887.0 C664.0 893.3 666.3 899.5 674.0 905.0 C681.7 910.5 693.0 915.8 704.0 920.0 C715.0 924.2 728.3 927.2 740.0 930.0 C751.7 932.8 762.8 934.2 774.0 937.0 C785.2 939.8 798.2 944.3 807.0 947.0 C815.8 949.7 819.2 950.8 827.0 953.0 C834.8 955.2 846.2 957.2 854.0 960.0 C861.8 962.8 868.0 965.0 874.0 970.0 C880.0 975.0 885.7 981.7 890.0 990.0 C894.3 998.3 898.3 1015.0 900.0 1020.0" fill="none" stroke="#fbd828" stroke-width="4.8" stroke-linejoin="round" stroke-linecap="round"/>
<path d="M381.0 544.0 C376.5 544.5 360.7 544.3 354.0 547.0 C347.3 549.7 346.0 555.5 341.0 560.0 C336.0 564.5 327.3 568.3 324.0 574.0 C320.7 579.7 320.5 586.3 321.0 594.0 C321.5 601.7 323.2 611.2 327.0 620.0 C330.8 628.8 338.8 638.7 344.0 647.0 C349.2 655.3 354.7 662.8 358.0 670.0 C361.3 677.2 360.2 682.8 364.0 690.0 C367.8 697.2 375.3 705.8 381.0 713.0 C386.7 720.2 393.0 726.3 398.0 733.0 C403.0 739.7 405.5 744.0 411.0 753.0 C416.5 762.0 424.8 779.2 431.0 787.0 C437.2 794.8 441.3 796.2 448.0 800.0 C454.7 803.8 465.5 803.8 471.0 810.0 C476.5 816.2 477.2 828.7 481.0 837.0 C484.8 845.3 487.8 853.3 494.0 860.0 C500.2 866.7 511.3 872.5 518.0 877.0 C524.7 881.5 527.3 882.7 534.0 887.0 C540.7 891.3 550.7 897.5 558.0 903.0 C565.3 908.5 571.3 915.5 578.0 920.0 C584.7 924.5 592.5 925.8 598.0 930.0 C603.5 934.2 605.5 940.5 611.0 945.0 C616.5 949.5 624.5 952.8 631.0 957.0 C637.5 961.2 642.8 965.0 650.0 970.0 C657.2 975.0 664.5 983.7 674.0 987.0 C683.5 990.3 694.8 987.3 707.0 990.0 C719.2 992.7 733.7 999.7 747.0 1003.0 C760.3 1006.3 775.8 1010.0 787.0 1010.0 C798.2 1010.0 807.3 1006.3 814.0 1003.0 C820.7 999.7 824.8 995.5 827.0 990.0 C829.2 984.5 827.0 976.2 827.0 970.0 C827.0 963.8 827.0 955.8 827.0 953.0" fill="none" stroke="#fbd828" stroke-width="4.8" stroke-linejoin="round" stroke-linecap="round"/>
<path d="M444.0 790.0 C444.7 786.7 446.5 776.3 448.0 770.0 C449.5 763.7 449.7 757.0 453.0 752.0 C456.3 747.0 462.2 742.5 468.0 740.0 C473.8 737.5 484.2 738.3 488.0 737.0 C491.8 735.7 485.5 738.2 491.0 732.0 C496.5 725.8 509.8 707.5 521.0 700.0 C532.2 692.5 544.2 692.2 558.0 687.0 C571.8 681.8 591.2 674.2 604.0 669.0 C616.8 663.8 626.7 660.0 635.0 656.0 C643.3 652.0 650.8 646.8 654.0 645.0" fill="none" stroke="#fbd828" stroke-width="4.8" stroke-linejoin="round" stroke-linecap="round"/>
<path d="M598.0 832.0 C600.7 828.7 607.5 820.0 614.0 812.0 C620.5 804.0 630.3 791.3 637.0 784.0 C643.7 776.7 647.8 771.8 654.0 768.0 C660.2 764.2 668.0 764.5 674.0 761.0 C680.0 757.5 685.0 751.7 690.0 747.0 C695.0 742.3 701.7 735.3 704.0 733.0" fill="none" stroke="#fbd828" stroke-width="4.8" stroke-linejoin="round" stroke-linecap="round"/>
<path d="M814.0 887.0 C810.7 888.0 802.3 891.3 794.0 893.0 C785.7 894.7 773.0 895.3 764.0 897.0 C755.0 898.7 748.3 900.3 740.0 903.0 C731.7 905.7 721.7 910.7 714.0 913.0 C706.3 915.3 700.7 917.5 694.0 917.0 C687.3 916.5 677.3 911.2 674.0 910.0" fill="none" stroke="#fbd828" stroke-width="4.8" stroke-linejoin="round" stroke-linecap="round"/>
<path d="M674.0 910.0 C675.7 914.5 681.8 927.0 684.0 937.0 C686.2 947.0 686.0 961.2 687.0 970.0 C688.0 978.8 690.0 981.7 690.0 990.0 C690.0 998.3 687.5 1015.0 687.0 1020.0" fill="none" stroke="#fbd828" stroke-width="4.8" stroke-linejoin="round" stroke-linecap="round"/>
<path d="M827.0 953.0 C825.8 955.8 823.8 965.0 820.0 970.0 C816.2 975.0 808.3 977.5 804.0 983.0 C799.7 988.5 796.8 996.8 794.0 1003.0 C791.2 1009.2 788.2 1017.2 787.0 1020.0" fill="none" stroke="#fbd828" stroke-width="4.8" stroke-linejoin="round" stroke-linecap="round"/>
<path d="M827.0 970.0 C829.2 973.3 836.2 981.7 840.0 990.0 C843.8 998.3 848.3 1015.0 850.0 1020.0" fill="none" stroke="#fbd828" stroke-width="4.8" stroke-linejoin="round" stroke-linecap="round"/>
<path d="M455.0 747.0 C453.2 748.7 445.2 751.0 444.0 757.0 C442.8 763.0 447.3 778.7 448.0 783.0" fill="none" stroke="#fbd828" stroke-width="4.8" stroke-linejoin="round" stroke-linecap="round"/>
<ellipse cx="103" cy="292" rx="11" ry="11" fill="#fff" stroke="#3a3a3a" stroke-width="1.4"/>
<text x="103" y="296" font-size="11" text-anchor="middle" fill="#555">1</text>
<ellipse cx="383" cy="959" rx="11" ry="11" fill="#fff" stroke="#3a3a3a" stroke-width="1.4"/>
<text x="383" y="963" font-size="11" text-anchor="middle" fill="#555">1</text>
<ellipse cx="536" cy="418" rx="15" ry="11.5" fill="#fff" stroke="#3a3a3a" stroke-width="1.4"/>
<text x="536" y="422" font-size="11" text-anchor="middle" fill="#555">13</text>
<ellipse cx="582.7" cy="893.3" rx="11" ry="11" fill="#fff" stroke="#3a3a3a" stroke-width="1.4"/>
<text x="582.7" y="897.3" font-size="11" text-anchor="middle" fill="#555">5</text>
<ellipse cx="472.7" cy="911.7" rx="15" ry="11.5" fill="#fff" stroke="#3a3a3a" stroke-width="1.4"/>
<text x="472.7" y="915.7" font-size="11" text-anchor="middle" fill="#555">35</text>
<ellipse cx="497.7" cy="977.3" rx="15" ry="11.5" fill="#fff" stroke="#3a3a3a" stroke-width="1.4"/>
<text x="497.7" y="981.3" font-size="11" text-anchor="middle" fill="#555">84</text>
<ellipse cx="411" cy="993" rx="15" ry="11.5" fill="#fff" stroke="#3a3a3a" stroke-width="1.4"/>
<text x="411" y="997" font-size="11" text-anchor="middle" fill="#555">84</text>
<clipPath id="sh594"><path d="M577.5 15.0 Q581.79 13.0 587.71 16.0 Q594 12.0 600.29 16.0 Q606.21 13.0 610.5 15.0 L612.5 20.5 C611.5 32.5 602.14 38.0 594 39.0 C585.86 38.0 576.5 32.5 575.5 20.5 Z"/></clipPath>
<path d="M577.5 15.0 Q581.79 13.0 587.71 16.0 Q594 12.0 600.29 16.0 Q606.21 13.0 610.5 15.0 L612.5 20.5 C611.5 32.5 602.14 38.0 594 39.0 C585.86 38.0 576.5 32.5 575.5 20.5 Z" fill="#fff" stroke="#fff" stroke-width="2" opacity="0.9"/>
<g clip-path="url(#sh594)"><rect x="574.5" y="11.0" width="39" height="29" fill="#003882"/><rect x="574.5" y="11.0" width="39" height="10.5" fill="#b0182a"/><rect x="574.5" y="21.0" width="39" height="1" fill="#f0d0d8"/></g>
<text x="594" y="35.0" font-size="11.5" font-weight="bold" text-anchor="middle" fill="#e8eef8" letter-spacing="0.5">80</text>
<clipPath id="sh460"><path d="M443.5 431.5 Q447.79 429.5 453.71 432.5 Q460 428.5 466.29 432.5 Q472.21 429.5 476.5 431.5 L478.5 437.0 C477.5 449 468.14 454.5 460 455.5 C451.86 454.5 442.5 449 441.5 437.0 Z"/></clipPath>
<path d="M443.5 431.5 Q447.79 429.5 453.71 432.5 Q460 428.5 466.29 432.5 Q472.21 429.5 476.5 431.5 L478.5 437.0 C477.5 449 468.14 454.5 460 455.5 C451.86 454.5 442.5 449 441.5 437.0 Z" fill="#fff" stroke="#fff" stroke-width="2" opacity="0.9"/>
<g clip-path="url(#sh460)"><rect x="440.5" y="427.5" width="39" height="29" fill="#003882"/><rect x="440.5" y="427.5" width="39" height="10.5" fill="#b0182a"/><rect x="440.5" y="437.5" width="39" height="1" fill="#f0d0d8"/></g>
<text x="460" y="451.5" font-size="11.5" font-weight="bold" text-anchor="middle" fill="#e8eef8" letter-spacing="0.5">80</text>
<clipPath id="sh520"><path d="M495.0 861.5 Q502.18 859.5 510.82 862.5 Q520 858.5 529.18 862.5 Q537.82 859.5 545.0 861.5 L547.0 867.0 C546.0 879 531.88 884.5 520 885.5 C508.12 884.5 494.0 879 493.0 867.0 Z"/></clipPath>
<path d="M495.0 861.5 Q502.18 859.5 510.82 862.5 Q520 858.5 529.18 862.5 Q537.82 859.5 545.0 861.5 L547.0 867.0 C546.0 879 531.88 884.5 520 885.5 C508.12 884.5 494.0 879 493.0 867.0 Z" fill="#fff" stroke="#fff" stroke-width="2" opacity="0.9"/>
<g clip-path="url(#sh520)"><rect x="492.0" y="857.5" width="56" height="29" fill="#003882"/><rect x="492.0" y="857.5" width="56" height="10.5" fill="#b0182a"/><rect x="492.0" y="867.5" width="56" height="1" fill="#f0d0d8"/></g>
<text x="520" y="881.5" font-size="11.5" font-weight="bold" text-anchor="middle" fill="#e8eef8" letter-spacing="0.5">280</text>
<path d="M306.5 431.0 C307.1 434.0 308.6 443.2 310.0 449.0 C311.4 454.8 314.2 463.2 315.0 466.0" fill="none" stroke="#14999b" stroke-width="7.5" stroke-linejoin="round" opacity="0.93"/>
<path d="M309.0 298.0 C311.2 299.6 315.8 304.6 322.0 307.5 C328.2 310.4 338.7 313.8 346.0 315.5 C353.3 317.2 359.3 317.2 366.0 318.0 C372.7 318.8 382.7 319.7 386.0 320.0" fill="none" stroke="#14999b" stroke-width="7.5" stroke-linejoin="round" opacity="0.93"/>
<path d="M535.4 150.1 C536.5 152.6 540.6 160.2 542.1 164.9 C543.6 169.6 544.7 174.1 544.2 178.3 C543.8 182.6 540.2 188.4 539.4 190.4" fill="none" stroke="#14999b" stroke-width="7.5" stroke-linejoin="round" opacity="0.93"/>
<path d="M617.5 183.7 C619.3 183.7 625.1 181.0 628.3 183.7 C631.4 186.4 633.5 194.7 636.4 199.9 C639.3 205.1 644.2 212.2 645.8 214.7" fill="none" stroke="#14999b" stroke-width="7.5" stroke-linejoin="round" opacity="0.93"/>
<path d="M381.0 489.0 C383.7 485.7 391.0 476.2 397.0 469.0 C403.0 461.8 410.3 450.8 417.0 446.0 C423.7 441.2 430.8 441.8 437.0 440.5 C443.2 439.2 447.3 439.3 454.0 438.5 C460.7 437.7 472.2 434.2 477.0 435.5 C481.8 436.8 483.0 442.8 483.0 446.0 C483.0 449.2 478.0 453.5 477.0 455.0" fill="none" stroke="#14999b" stroke-width="7.5" stroke-linejoin="round" opacity="0.93"/>
<path d="M491.0 731.0 C496.0 725.8 509.8 707.1 521.0 699.5 C532.2 691.9 544.2 690.8 558.0 685.5 C571.8 680.2 591.2 672.7 604.0 667.5 C616.8 662.3 629.8 656.7 635.0 654.5" fill="none" stroke="#14999b" stroke-width="7.5" stroke-linejoin="round" opacity="0.93"/>
<path d="M614.0 810.0 C617.8 805.4 630.3 789.8 637.0 782.5 C643.7 775.2 647.8 770.3 654.0 766.5 C660.2 762.7 670.7 760.7 674.0 759.5" fill="none" stroke="#14999b" stroke-width="7.5" stroke-linejoin="round" opacity="0.93"/>
<path d="M807.0 875.0 C807.0 877.0 809.2 883.3 807.0 887.0 C804.8 890.7 796.2 895.3 794.0 897.0" fill="none" stroke="#14999b" stroke-width="7.5" stroke-linejoin="round" opacity="0.93"/>
<path d="M815.0 873.0 C815.0 875.3 818.0 883.0 815.0 887.0 C812.0 891.0 800.0 895.3 797.0 897.0" fill="none" stroke="#14999b" stroke-width="7.5" stroke-linejoin="round" opacity="0.93"/>
<path d="M116 80.7 L110 91 L107 104" stroke="#6e6a5c" stroke-opacity="0.43" stroke-width="13" stroke-linejoin="round" fill="none"/>
<path d="M96 121 L90.5 132.6 L92.6 147.4" stroke="#6e6a5c" stroke-opacity="0.43" stroke-width="13" stroke-linejoin="round" fill="none"/>
<path d="M112 157 L119 169 L125 183" stroke="#6e6a5c" stroke-opacity="0.43" stroke-width="13" stroke-linejoin="round" fill="none"/>
<path d="M133 200 L144 208 L153 220" stroke="#6e6a5c" stroke-opacity="0.43" stroke-width="13" stroke-linejoin="round" fill="none"/>
<path d="M157 230 L171 229 L185 232" stroke="#6e6a5c" stroke-opacity="0.43" stroke-width="13" stroke-linejoin="round" fill="none"/>
<path d="M198 243 L209 249 L218 258" stroke="#6e6a5c" stroke-opacity="0.43" stroke-width="13" stroke-linejoin="round" fill="none"/>
<path d="M240 270 L252 271 L263 275" stroke="#6e6a5c" stroke-opacity="0.43" stroke-width="13" stroke-linejoin="round" fill="none"/>
<path d="M139 95.6 L146.6 108.2 L157 115.6" stroke="#6e6a5c" stroke-opacity="0.43" stroke-width="13" stroke-linejoin="round" fill="none"/>
<path d="M174 110.4 L185.7 106.1 L202.6 114.6" stroke="#6e6a5c" stroke-opacity="0.43" stroke-width="13" stroke-linejoin="round" fill="none"/>
<path d="M223 123 L237 132" stroke="#6e6a5c" stroke-opacity="0.43" stroke-width="13" stroke-linejoin="round" fill="none"/>
<path d="M281 281 L301 301" stroke="#6e6a5c" stroke-opacity="0.43" stroke-width="13" stroke-linejoin="round" fill="none"/>
<path d="M317.6 310.4 L349.9 320.5" stroke="#6e6a5c" stroke-opacity="0.43" stroke-width="13" stroke-linejoin="round" fill="none"/>
<path d="M366 320.5 L392 324" stroke="#6e6a5c" stroke-opacity="0.43" stroke-width="13" stroke-linejoin="round" fill="none"/>
<path d="M413.5 327 L444.4 327.7" stroke="#6e6a5c" stroke-opacity="0.43" stroke-width="13" stroke-linejoin="round" fill="none"/>
<path d="M457.9 347.2 L475.4 363.3" stroke="#6e6a5c" stroke-opacity="0.43" stroke-width="13" stroke-linejoin="round" fill="none"/>
<path d="M479 397 L486 414" stroke="#6e6a5c" stroke-opacity="0.43" stroke-width="13" stroke-linejoin="round" fill="none"/>
<path d="M489 434 L497 450" stroke="#6e6a5c" stroke-opacity="0.43" stroke-width="13" stroke-linejoin="round" fill="none"/>
<path d="M512 474 L534 490" stroke="#6e6a5c" stroke-opacity="0.43" stroke-width="13" stroke-linejoin="round" fill="none"/>
<path d="M551 500 L576 515" stroke="#6e6a5c" stroke-opacity="0.43" stroke-width="13" stroke-linejoin="round" fill="none"/>
<path d="M589 534 L604 550" stroke="#6e6a5c" stroke-opacity="0.43" stroke-width="13" stroke-linejoin="round" fill="none"/>
<path d="M619 569 L640 590" stroke="#6e6a5c" stroke-opacity="0.43" stroke-width="13" stroke-linejoin="round" fill="none"/>
<path d="M654 604 L675 625" stroke="#6e6a5c" stroke-opacity="0.43" stroke-width="13" stroke-linejoin="round" fill="none"/>
<path d="M684 644 L704 665" stroke="#6e6a5c" stroke-opacity="0.43" stroke-width="13" stroke-linejoin="round" fill="none"/>
<path d="M716 679 L733 698" stroke="#6e6a5c" stroke-opacity="0.43" stroke-width="13" stroke-linejoin="round" fill="none"/>
<path d="M749 715 L774 730" stroke="#6e6a5c" stroke-opacity="0.43" stroke-width="13" stroke-linejoin="round" fill="none"/>
<path d="M787 745 L810 762" stroke="#6e6a5c" stroke-opacity="0.43" stroke-width="13" stroke-linejoin="round" fill="none"/>
<path d="M810 783 L807 813" stroke="#6e6a5c" stroke-opacity="0.43" stroke-width="13" stroke-linejoin="round" fill="none"/>
<path d="M805 827 L820 857" stroke="#6e6a5c" stroke-opacity="0.43" stroke-width="13" stroke-linejoin="round" fill="none"/>
<path d="M797 900 L774 907" stroke="#6e6a5c" stroke-opacity="0.43" stroke-width="13" stroke-linejoin="round" fill="none"/>
<path d="M754 908 L727 913" stroke="#6e6a5c" stroke-opacity="0.43" stroke-width="13" stroke-linejoin="round" fill="none"/>
<path d="M717 927 L697 920" stroke="#6e6a5c" stroke-opacity="0.43" stroke-width="13" stroke-linejoin="round" fill="none"/>
<path d="M674 912 L650 900" stroke="#6e6a5c" stroke-opacity="0.43" stroke-width="13" stroke-linejoin="round" fill="none"/>
<path d="M637 885 L617 873" stroke="#6e6a5c" stroke-opacity="0.43" stroke-width="13" stroke-linejoin="round" fill="none"/>
<path d="M571 840 L598 857" stroke="#6e6a5c" stroke-opacity="0.43" stroke-width="13" stroke-linejoin="round" fill="none"/>
<path d="M541 820 L558 833" stroke="#6e6a5c" stroke-opacity="0.43" stroke-width="13" stroke-linejoin="round" fill="none"/>
<path d="M504 787 L521 803" stroke="#6e6a5c" stroke-opacity="0.43" stroke-width="13" stroke-linejoin="round" fill="none"/>
<path d="M468 753 L491 777" stroke="#6e6a5c" stroke-opacity="0.43" stroke-width="13" stroke-linejoin="round" fill="none"/>
<path d="M434 723 L454 737" stroke="#6e6a5c" stroke-opacity="0.43" stroke-width="13" stroke-linejoin="round" fill="none"/>
<path d="M391 693 L411 710" stroke="#6e6a5c" stroke-opacity="0.43" stroke-width="13" stroke-linejoin="round" fill="none"/>
<path d="M372 514 L377 537" stroke="#6e6a5c" stroke-opacity="0.43" stroke-width="13" stroke-linejoin="round" fill="none"/>
<path d="M384 564 L386 587" stroke="#6e6a5c" stroke-opacity="0.43" stroke-width="13" stroke-linejoin="round" fill="none"/>
<path d="M394 607 L382 627" stroke="#6e6a5c" stroke-opacity="0.43" stroke-width="13" stroke-linejoin="round" fill="none"/>
<path d="M369 654 L381 677" stroke="#6e6a5c" stroke-opacity="0.43" stroke-width="13" stroke-linejoin="round" fill="none"/>
<text x="237" y="131.5" font-size="14" text-anchor="middle" fill="#4c4c4c" stroke="#fff" stroke-width="3" stroke-linejoin="round" paint-order="stroke" stroke-opacity="0.85" letter-spacing="0.3">Novato</text>
<text x="267.5" y="278.8" font-size="14" text-anchor="middle" fill="#4c4c4c" stroke="#fff" stroke-width="3" stroke-linejoin="round" paint-order="stroke" stroke-opacity="0.85" letter-spacing="0.3">San Rafael</text>
<text x="278" y="310.5" font-size="14" text-anchor="middle" fill="#4c4c4c" stroke="#fff" stroke-width="3" stroke-linejoin="round" paint-order="stroke" stroke-opacity="0.85" letter-spacing="0.3">Greenbrae</text>
<text x="265" y="322.7" font-size="14" text-anchor="middle" fill="#4c4c4c" stroke="#fff" stroke-width="3" stroke-linejoin="round" paint-order="stroke" stroke-opacity="0.85" letter-spacing="0.3">Larkspur</text>
<text x="254" y="354.4" font-size="14" text-anchor="middle" fill="#4c4c4c" stroke="#fff" stroke-width="3" stroke-linejoin="round" paint-order="stroke" stroke-opacity="0.85" letter-spacing="0.3">Mill Valley</text>
<text x="514" y="56.0" font-size="14" text-anchor="middle" fill="#4c4c4c" stroke="#fff" stroke-width="3" stroke-linejoin="round" paint-order="stroke" stroke-opacity="0.85" letter-spacing="0.3">American</text>
<text x="514" y="68.0" font-size="14" text-anchor="middle" fill="#4c4c4c" stroke="#fff" stroke-width="3" stroke-linejoin="round" paint-order="stroke" stroke-opacity="0.85" letter-spacing="0.3">Canyon</text>
<text x="514" y="137.0" font-size="14" text-anchor="middle" fill="#4c4c4c" stroke="#fff" stroke-width="3" stroke-linejoin="round" paint-order="stroke" stroke-opacity="0.85" letter-spacing="0.3">Vallejo</text>
<text x="504" y="238.0" font-size="14" text-anchor="middle" fill="#4c4c4c" stroke="#fff" stroke-width="3" stroke-linejoin="round" paint-order="stroke" stroke-opacity="0.85" letter-spacing="0.3">Hercules</text>
<text x="436" y="294.0" font-size="14" text-anchor="middle" fill="#4c4c4c" stroke="#fff" stroke-width="3" stroke-linejoin="round" paint-order="stroke" stroke-opacity="0.85" letter-spacing="0.3">San Pablo</text>
<text x="436" y="319.0" font-size="14" text-anchor="middle" fill="#4c4c4c" stroke="#fff" stroke-width="3" stroke-linejoin="round" paint-order="stroke" stroke-opacity="0.85" letter-spacing="0.3">Richmond</text>
<text x="464" y="345.0" font-size="14" text-anchor="middle" fill="#4c4c4c" stroke="#fff" stroke-width="3" stroke-linejoin="round" paint-order="stroke" stroke-opacity="0.85" letter-spacing="0.3">El Cerrito</text>
<text x="603" y="191.4" font-size="14" text-anchor="middle" fill="#4c4c4c" stroke="#fff" stroke-width="3" stroke-linejoin="round" paint-order="stroke" stroke-opacity="0.85" letter-spacing="0.3">Benicia</text>
<text x="619" y="233.8" font-size="14" text-anchor="middle" fill="#4c4c4c" stroke="#fff" stroke-width="3" stroke-linejoin="round" paint-order="stroke" stroke-opacity="0.85" letter-spacing="0.3">Martinez</text>
<text x="838" y="228.0" font-size="14" text-anchor="middle" fill="#4c4c4c" stroke="#fff" stroke-width="3" stroke-linejoin="round" paint-order="stroke" stroke-opacity="0.85" letter-spacing="0.3">Pittsburg</text>
<text x="716" y="272.0" font-size="14" text-anchor="middle" fill="#4c4c4c" stroke="#fff" stroke-width="3" stroke-linejoin="round" paint-order="stroke" stroke-opacity="0.85" letter-spacing="0.3">Concord</text>
<text x="684" y="302.0" font-size="14" text-anchor="middle" fill="#4c4c4c" stroke="#fff" stroke-width="3" stroke-linejoin="round" paint-order="stroke" stroke-opacity="0.85" letter-spacing="0.3">Pleasant</text>
<text x="684" y="315.0" font-size="14" text-anchor="middle" fill="#4c4c4c" stroke="#fff" stroke-width="3" stroke-linejoin="round" paint-order="stroke" stroke-opacity="0.85" letter-spacing="0.3">Hill</text>
<text x="794" y="314.0" font-size="14" text-anchor="middle" fill="#4c4c4c" stroke="#fff" stroke-width="3" stroke-linejoin="round" paint-order="stroke" stroke-opacity="0.85" letter-spacing="0.3">Clayton</text>
<text x="337" y="385.0" font-size="14" text-anchor="middle" fill="#4c4c4c" stroke="#fff" stroke-width="3" stroke-linejoin="round" paint-order="stroke" stroke-opacity="0.85" letter-spacing="0.3">Belvedere-</text>
<text x="337" y="399.0" font-size="14" text-anchor="middle" fill="#4c4c4c" stroke="#fff" stroke-width="3" stroke-linejoin="round" paint-order="stroke" stroke-opacity="0.85" letter-spacing="0.3">Tiburon</text>
<text x="475" y="376.0" font-size="14" text-anchor="middle" fill="#4c4c4c" stroke="#fff" stroke-width="3" stroke-linejoin="round" paint-order="stroke" stroke-opacity="0.85" letter-spacing="0.3">Albany</text>
<text x="500" y="395.0" font-size="14" text-anchor="middle" fill="#4c4c4c" stroke="#fff" stroke-width="3" stroke-linejoin="round" paint-order="stroke" stroke-opacity="0.85" letter-spacing="0.3">Berkeley</text>
<text x="571" y="381.0" font-size="14" text-anchor="middle" fill="#4c4c4c" stroke="#fff" stroke-width="3" stroke-linejoin="round" paint-order="stroke" stroke-opacity="0.85" letter-spacing="0.3">Orinda</text>
<text x="522" y="513.0" font-size="14" text-anchor="middle" fill="#4c4c4c" stroke="#fff" stroke-width="3" stroke-linejoin="round" paint-order="stroke" stroke-opacity="0.85" letter-spacing="0.3">Alameda</text>
<text x="599" y="554.5" font-size="14" text-anchor="middle" fill="#4c4c4c" stroke="#fff" stroke-width="3" stroke-linejoin="round" paint-order="stroke" stroke-opacity="0.85" letter-spacing="0.3">San Leandro</text>
<text x="321.5" y="596.0" font-size="14" text-anchor="middle" fill="#4c4c4c" stroke="#fff" stroke-width="3" stroke-linejoin="round" paint-order="stroke" stroke-opacity="0.85" letter-spacing="0.3">Daly City</text>
<text x="373" y="629.0" font-size="14" text-anchor="middle" fill="#4c4c4c" stroke="#fff" stroke-width="3" stroke-linejoin="round" paint-order="stroke" stroke-opacity="0.85" letter-spacing="0.3">South</text>
<text x="373" y="642.0" font-size="14" text-anchor="middle" fill="#4c4c4c" stroke="#fff" stroke-width="3" stroke-linejoin="round" paint-order="stroke" stroke-opacity="0.85" letter-spacing="0.3">San Francisco</text>
<text x="388" y="694.0" font-size="14" text-anchor="middle" fill="#4c4c4c" stroke="#fff" stroke-width="3" stroke-linejoin="round" paint-order="stroke" stroke-opacity="0.85" letter-spacing="0.3">Millbrae</text>
<text x="592" y="441.0" font-size="14" text-anchor="middle" fill="#4c4c4c" stroke="#fff" stroke-width="3" stroke-linejoin="round" paint-order="stroke" stroke-opacity="0.85" letter-spacing="0.3">Canyon</text>
<text x="627" y="415.0" font-size="14" text-anchor="middle" fill="#4c4c4c" stroke="#fff" stroke-width="3" stroke-linejoin="round" paint-order="stroke" stroke-opacity="0.85" letter-spacing="0.3">Moraga</text>
<text x="686" y="356.0" font-size="14" text-anchor="middle" fill="#4c4c4c" stroke="#fff" stroke-width="3" stroke-linejoin="round" paint-order="stroke" stroke-opacity="0.85" letter-spacing="0.3">Walnut</text>
<text x="686" y="369.0" font-size="14" text-anchor="middle" fill="#4c4c4c" stroke="#fff" stroke-width="3" stroke-linejoin="round" paint-order="stroke" stroke-opacity="0.85" letter-spacing="0.3">Creek</text>
<text x="710" y="419.0" font-size="14" text-anchor="middle" fill="#4c4c4c" stroke="#fff" stroke-width="3" stroke-linejoin="round" paint-order="stroke" stroke-opacity="0.85" letter-spacing="0.3">Alamo</text>
<text x="734" y="438.0" font-size="14" text-anchor="middle" fill="#4c4c4c" stroke="#fff" stroke-width="3" stroke-linejoin="round" paint-order="stroke" stroke-opacity="0.85" letter-spacing="0.3">Danville</text>
<text x="767" y="498.0" font-size="14" text-anchor="middle" fill="#4c4c4c" stroke="#fff" stroke-width="3" stroke-linejoin="round" paint-order="stroke" stroke-opacity="0.85" letter-spacing="0.3">San Ramon</text>
<text x="813" y="581.0" font-size="14" text-anchor="middle" fill="#4c4c4c" stroke="#fff" stroke-width="3" stroke-linejoin="round" paint-order="stroke" stroke-opacity="0.85" letter-spacing="0.3">Dublin</text>
<text x="848" y="632.0" font-size="14" text-anchor="middle" fill="#4c4c4c" stroke="#fff" stroke-width="3" stroke-linejoin="round" paint-order="stroke" stroke-opacity="0.85" letter-spacing="0.3">Pleasanton</text>
<text x="664" y="586.0" font-size="14" text-anchor="middle" fill="#4c4c4c" stroke="#fff" stroke-width="3" stroke-linejoin="round" paint-order="stroke" stroke-opacity="0.85" letter-spacing="0.3">Castro</text>
<text x="664" y="600.0" font-size="14" text-anchor="middle" fill="#4c4c4c" stroke="#fff" stroke-width="3" stroke-linejoin="round" paint-order="stroke" stroke-opacity="0.85" letter-spacing="0.3">Valley</text>
<text x="663" y="618.0" font-size="14" text-anchor="middle" fill="#4c4c4c" stroke="#fff" stroke-width="3" stroke-linejoin="round" paint-order="stroke" stroke-opacity="0.85" letter-spacing="0.3">Hayward</text>
<text x="424" y="724.0" font-size="14" text-anchor="middle" fill="#4c4c4c" stroke="#fff" stroke-width="3" stroke-linejoin="round" paint-order="stroke" stroke-opacity="0.85" letter-spacing="0.3">Hillsborough</text>
<text x="460" y="757.0" font-size="14" text-anchor="middle" fill="#4c4c4c" stroke="#fff" stroke-width="3" stroke-linejoin="round" paint-order="stroke" stroke-opacity="0.85" letter-spacing="0.3">San Mateo</text>
<text x="495" y="789.0" font-size="14" text-anchor="middle" fill="#4c4c4c" stroke="#fff" stroke-width="3" stroke-linejoin="round" paint-order="stroke" stroke-opacity="0.85" letter-spacing="0.3">Belmont</text>
<text x="538.7" y="820.7" font-size="14" text-anchor="middle" fill="#4c4c4c" stroke="#fff" stroke-width="3" stroke-linejoin="round" paint-order="stroke" stroke-opacity="0.85" letter-spacing="0.3">Redwood</text>
<text x="538.7" y="834.0" font-size="14" text-anchor="middle" fill="#4c4c4c" stroke="#fff" stroke-width="3" stroke-linejoin="round" paint-order="stroke" stroke-opacity="0.85" letter-spacing="0.3">City</text>
<text x="616.7" y="832.7" font-size="14" text-anchor="middle" fill="#4c4c4c" stroke="#fff" stroke-width="3" stroke-linejoin="round" paint-order="stroke" stroke-opacity="0.85" letter-spacing="0.3">East Palo</text>
<text x="616" y="846.0" font-size="14" text-anchor="middle" fill="#4c4c4c" stroke="#fff" stroke-width="3" stroke-linejoin="round" paint-order="stroke" stroke-opacity="0.85" letter-spacing="0.3">Alto</text>
<text x="596.7" y="870.7" font-size="14" text-anchor="middle" fill="#4c4c4c" stroke="#fff" stroke-width="3" stroke-linejoin="round" paint-order="stroke" stroke-opacity="0.85" letter-spacing="0.3">Palo Alto</text>
<text x="667" y="926.0" font-size="14" text-anchor="middle" fill="#4c4c4c" stroke="#fff" stroke-width="3" stroke-linejoin="round" paint-order="stroke" stroke-opacity="0.85" letter-spacing="0.3">Mountain</text>
<text x="667" y="940.0" font-size="14" text-anchor="middle" fill="#4c4c4c" stroke="#fff" stroke-width="3" stroke-linejoin="round" paint-order="stroke" stroke-opacity="0.85" letter-spacing="0.3">View</text>
<text x="359" y="845.0" font-size="14" text-anchor="middle" fill="#4c4c4c" stroke="#fff" stroke-width="3" stroke-linejoin="round" paint-order="stroke" stroke-opacity="0.85" letter-spacing="0.3">Half Moon</text>
<text x="359" y="858.0" font-size="14" text-anchor="middle" fill="#4c4c4c" stroke="#fff" stroke-width="3" stroke-linejoin="round" paint-order="stroke" stroke-opacity="0.85" letter-spacing="0.3">Bay</text>
<text x="714" y="704.0" font-size="14" text-anchor="middle" fill="#4c4c4c" stroke="#fff" stroke-width="3" stroke-linejoin="round" paint-order="stroke" stroke-opacity="0.85" letter-spacing="0.3">Union</text>
<text x="714" y="718.0" font-size="14" text-anchor="middle" fill="#4c4c4c" stroke="#fff" stroke-width="3" stroke-linejoin="round" paint-order="stroke" stroke-opacity="0.85" letter-spacing="0.3">City</text>
<text x="755" y="753.0" font-size="14" text-anchor="middle" fill="#4c4c4c" stroke="#fff" stroke-width="3" stroke-linejoin="round" paint-order="stroke" stroke-opacity="0.85" letter-spacing="0.3">Fremont</text>
<text x="830.5" y="886.0" font-size="14" text-anchor="middle" fill="#4c4c4c" stroke="#fff" stroke-width="3" stroke-linejoin="round" paint-order="stroke" stroke-opacity="0.85" letter-spacing="0.3">Milpitas</text>
<text x="714" y="1012.0" font-size="14" text-anchor="middle" fill="#4c4c4c" stroke="#fff" stroke-width="3" stroke-linejoin="round" paint-order="stroke" stroke-opacity="0.85" letter-spacing="0.3">Cupertino</text>
<text x="858" y="957.4" font-size="13.5" text-anchor="start" fill="#4c4c4c" stroke="#fff" stroke-width="3" stroke-linejoin="round" paint-order="stroke" stroke-opacity="0.85" letter-spacing="0.3">Alum Rock</text>
<text x="497" y="470.7" font-size="18.5" text-anchor="middle" fill="#3a3a3a" stroke="#fff" stroke-width="3" stroke-linejoin="round" paint-order="stroke" stroke-opacity="0.85" letter-spacing="0.3">Oakland</text>
<text x="369" y="501.9" font-size="19.3" text-anchor="middle" fill="#333" stroke="#fff" stroke-width="3" stroke-linejoin="round" paint-order="stroke" stroke-opacity="0.85" letter-spacing="0.3">San Francisco</text>
<text x="840" y="991.5" font-size="18" text-anchor="middle" fill="#3a3a3a" stroke="#fff" stroke-width="3" stroke-linejoin="round" paint-order="stroke" stroke-opacity="0.85" letter-spacing="0.3">San Jose</text>
<ellipse cx="232.3" cy="128.2" rx="9.500" ry="5" fill="#8a8880" opacity="0.45" transform="rotate(38 232.3 128.2)"/>
<path d="M226.8 115.8 L238.3 126.2" stroke="#1a1a1a" stroke-width="1.2"/>
<g transform="translate(219.65 109.3) rotate(-47.7)"><path d="M-4 1 L-3.4 5.500 L-5.400 9.500 Q0 13 5.400 9.500 L3.400 5.500 L4 1 Z" fill="#008200"/><ellipse cx="0" cy="0" rx="5.600" ry="3.600" fill="#005c00"/><ellipse cx="0" cy="-0.800" rx="5.400" ry="3.100" fill="#00a000"/></g>
<ellipse cx="360.4" cy="495.9" rx="9.500" ry="5" fill="#8a8880" opacity="0.45" transform="rotate(38 360.4 495.9)"/>
<path d="M357.5 485.5 L366.4 493.9" stroke="#1a1a1a" stroke-width="1.2"/>
<g transform="translate(351 478.2) rotate(-41.7)"><path d="M-4 1 L-3.4 5.500 L-5.400 9.500 Q0 13 5.400 9.500 L3.400 5.500 L4 1 Z" fill="#f00000"/><ellipse cx="0" cy="0" rx="5.600" ry="3.600" fill="#8a0000"/><ellipse cx="0" cy="-0.800" rx="5.400" ry="3.100" fill="#ee0000"/></g>
<defs><linearGradient id="ng1" gradientUnits="userSpaceOnUse" x1="0" y1="14" x2="0" y2="34"><stop offset="0" stop-color="#b9b5aa"/><stop offset="0.55" stop-color="#aaa69b"/><stop offset="0.56" stop-color="#9f9b90"/><stop offset="1" stop-color="#9d998e"/></linearGradient><linearGradient id="ng2" gradientUnits="userSpaceOnUse" x1="0" y1="26" x2="0" y2="79"><stop offset="0" stop-color="#bbb7ac"/><stop offset="0.49" stop-color="#a7a398"/><stop offset="0.5" stop-color="#9d998e"/><stop offset="1" stop-color="#9a968b"/></linearGradient><linearGradient id="ng3" gradientUnits="userSpaceOnUse" x1="0" y1="62" x2="0" y2="90"><stop offset="0" stop-color="#bab6ab"/><stop offset="0.55" stop-color="#a9a59a"/><stop offset="0.56" stop-color="#9e9a8f"/><stop offset="1" stop-color="#9b978c"/></linearGradient><linearGradient id="ng4" gradientUnits="userSpaceOnUse" x1="0" y1="40" x2="0" y2="52.3"><stop offset="0" stop-color="#b6b2a7"/><stop offset="1" stop-color="#a6a297"/></linearGradient></defs>
<g opacity="0.96"><circle cx="52.3" cy="52.3" r="39.5" fill="#dcd9cf" stroke="#c9c6bb" stroke-width="1"/><circle cx="52.3" cy="52.3" r="37.5" fill="#9d998e"/><path d="M52.3 52.3 L25.8 25.8 A37.5 37.5 0 0 1 78.8 25.8 Z" fill="url(#ng1)"/><path d="M52.3 52.3 L25.8 25.8 A37.5 37.5 0 0 0 25.8 78.8 Z" fill="url(#ng2)"/><path d="M52.3 52.3 L78.8 25.8 A37.5 37.5 0 0 1 78.8 78.8 Z" fill="url(#ng2)"/><path d="M52.3 52.3 L25.8 78.8 A37.5 37.5 0 0 0 78.8 78.8 Z" fill="url(#ng3)"/><circle cx="52.3" cy="52.3" r="16.5" fill="#9d998e"/><path d="M40.3 52.3a12 12 0 0 1 24 0z" fill="url(#ng4)"/><circle cx="52.3" cy="52.3" r="3" fill="#e4e1d8"/><path d="M52.3 20l5 9.800h-10z M52.3 84.500l5-9.800h-10z M20 52.3l9.800-5v10z M84.500 52.3l-9.800-5v10z" fill="#e4e1d8"/></g>
<rect x="880" y="360" width="25.5" height="296" rx="4" fill="#8b877c" opacity="0.82"/>
<rect x="880" y="360" width="25.5" height="296" rx="4" fill="none" stroke="#b5b2a8" stroke-opacity="0.8"/>
<path d="M895.5 385v240" stroke="#77736a" stroke-width="2"/>
<rect x="888.500" y="392" width="2" height="1" fill="#c8c5bb"/>
<rect x="888.500" y="404" width="2" height="1" fill="#c8c5bb"/>
<rect x="888.500" y="416" width="2" height="1" fill="#c8c5bb"/>
<rect x="888.500" y="428" width="2" height="1" fill="#c8c5bb"/>
<rect x="888.500" y="440" width="2" height="1" fill="#c8c5bb"/>
<rect x="888.500" y="452" width="2" height="1" fill="#c8c5bb"/>
<rect x="888.500" y="464" width="2" height="1" fill="#c8c5bb"/>
<rect x="888.500" y="476" width="2" height="1" fill="#c8c5bb"/>
<rect x="888.500" y="488" width="2" height="1" fill="#c8c5bb"/>
<rect x="888.500" y="500" width="2" height="1" fill="#c8c5bb"/>
<rect x="888.500" y="512" width="2" height="1" fill="#c8c5bb"/>
<rect x="888.500" y="524" width="2" height="1" fill="#c8c5bb"/>
<rect x="888.500" y="536" width="2" height="1" fill="#c8c5bb"/>
<rect x="888.500" y="548" width="2" height="1" fill="#c8c5bb"/>
<rect x="888.500" y="560" width="2" height="1" fill="#c8c5bb"/>
<rect x="888.500" y="572" width="2" height="1" fill="#c8c5bb"/>
<rect x="888.500" y="584" width="2" height="1" fill="#c8c5bb"/>
<rect x="888.500" y="596" width="2" height="1" fill="#c8c5bb"/>
<ellipse cx="895.3" cy="500.300" rx="4" ry="8" fill="#cfccc2" stroke="#8a867b"/>
<circle cx="892.7" cy="373" r="6" fill="#a5a196"/><path d="M889 373h7.5M892.7 369.300v7.500" stroke="#dedbd2" stroke-width="1.3"/>
<circle cx="892.7" cy="643" r="6" fill="#a5a196"/><path d="M889 643h7.500" stroke="#dedbd2" stroke-width="1.3"/>
<rect x="4" y="997.500" width="88" height="16" rx="4.500" fill="#5a5a5a" stroke="#dadada" stroke-width="1.2" opacity="0.97"/>
<rect x="8" y="1002" width="50" height="6.700" fill="#000" stroke="#e8e8e8" stroke-width="0.9"/><rect x="18" y="1002.500" width="10" height="5.700" fill="#454545"/><rect x="38" y="1002.500" width="10" height="5.700" fill="#454545"/>
<text x="65.400" y="1008.700" font-size="10" fill="#ececec">5 km</text>
<rect x="379.400" y="998" width="152.300" height="14" rx="4" fill="#555" stroke="#d0d0d0" stroke-width="1.1" opacity="0.97"/>
<text x="455.800" y="1008.800" font-size="10.300" fill="#efefef" text-anchor="middle" letter-spacing="-0.1">37° 31′ 36″ N, 122° 49′ 01″ W</text>
<rect x="808.500" y="964" width="97.500" height="24" rx="3" fill="#75736a" opacity="0.85" stroke="#5e5c55"/>
<circle cx="820.600" cy="975.800" r="6" fill="#9a978c"/><path d="M817.600 974.500h6l-3 4z" fill="#e0ddd4"/>
<text x="834" y="978" font-size="10" font-weight="bold" fill="#ecebe6" letter-spacing="-0.3">Kartenebenen</text>
<rect x="898.500" y="999.500" width="7.500" height="12" rx="3.700" fill="#55524c" stroke="#d8d6cf" stroke-width="0.8"/>
<g transform="translate(891,4)"><rect x="0" y="0" width="17" height="17" rx="3" fill="#c9dc8c" stroke="#3a4a50" stroke-width="1.2"/><path d="M1 1h5v8h-5z" fill="#a8d4f0"/><rect x="7" y="7" width="9.500" height="9.500" fill="#dce6a0" stroke="#0a3a66" stroke-width="1.3"/></g>
</g></svg>

</body></html>
